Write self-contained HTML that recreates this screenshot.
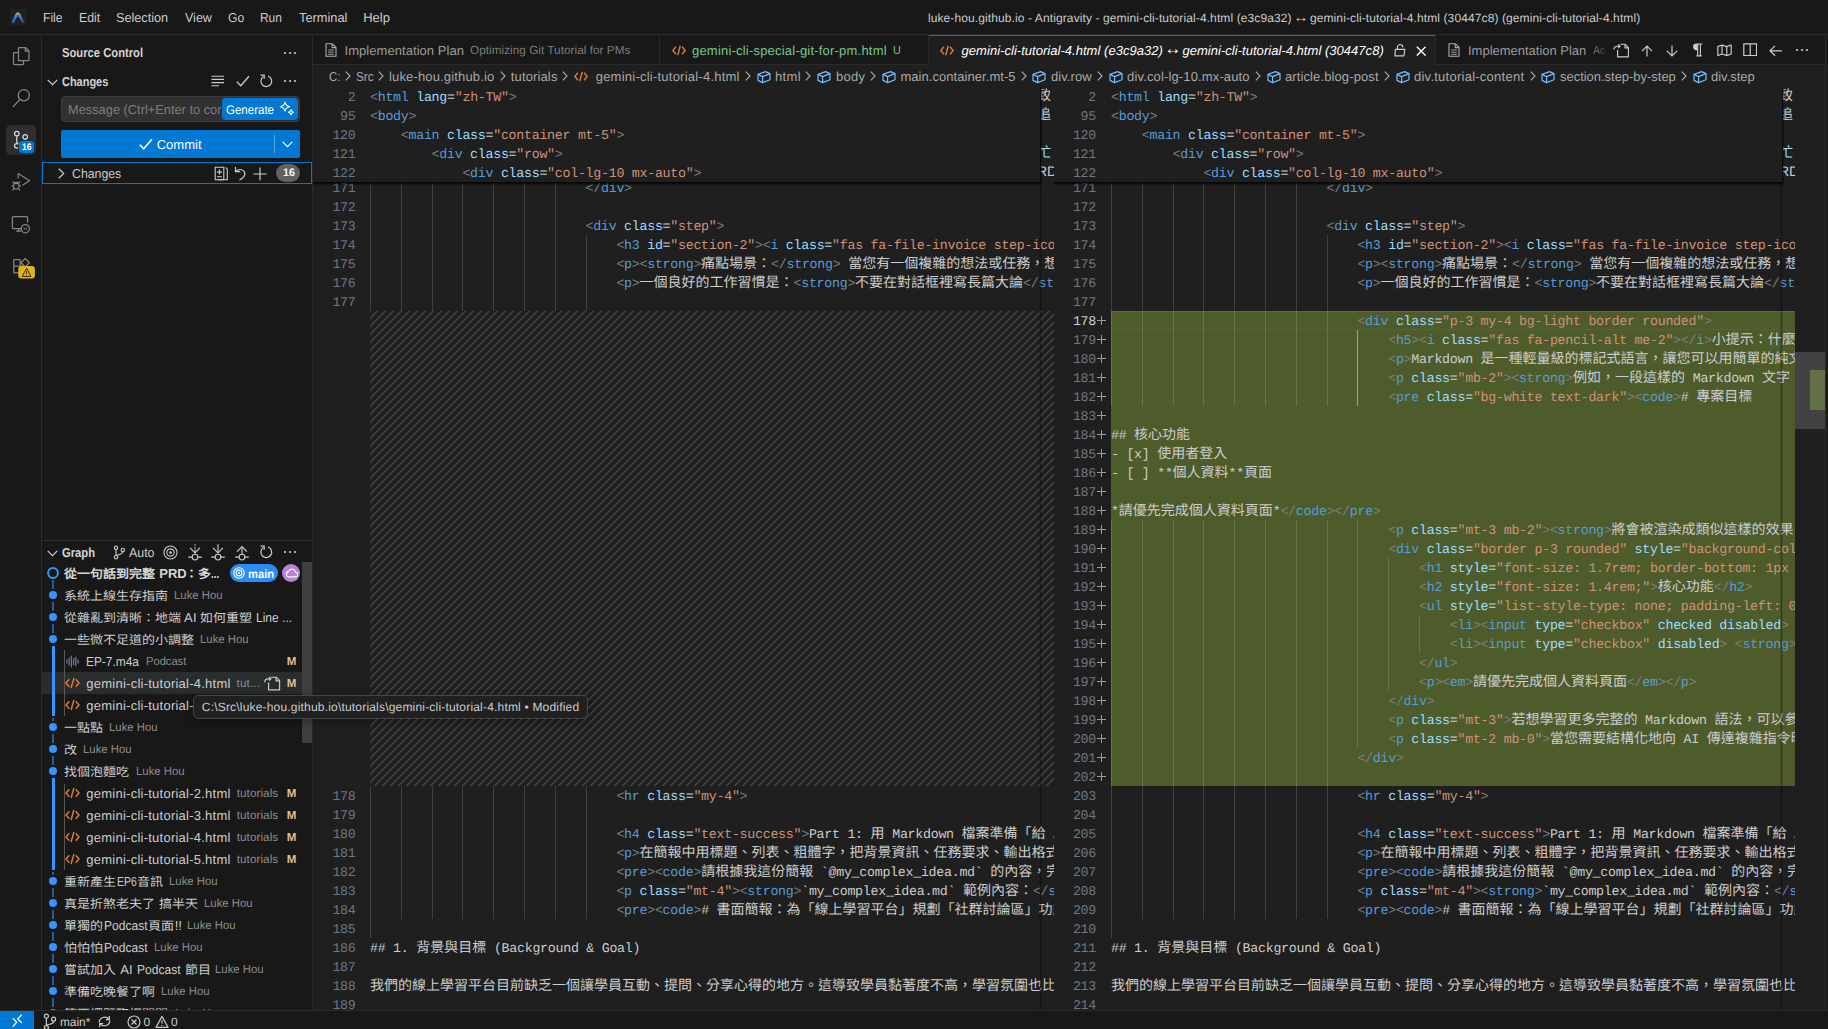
<!DOCTYPE html>
<html lang="zh-TW"><head><meta charset="utf-8"><title>Antigravity</title><style>
*{box-sizing:border-box;margin:0;padding:0}
html,body{width:1828px;height:1029px;overflow:hidden;background:#181818}
body{text-rendering:geometricPrecision;position:relative;font-family:"Liberation Sans",sans-serif;font-size:13px;color:#ccc}
.b{position:absolute;display:block}
.t{position:absolute;white-space:pre;line-height:20px;transform-origin:0 50%;display:block}
.cjs{overflow:visible;letter-spacing:0;font-weight:500}
.pane{position:absolute;overflow:hidden}
.ln{position:absolute;left:0;height:19px;line-height:21px;white-space:pre;font-family:"Liberation Mono",monospace;font-size:13.3px;letter-spacing:-0.28px;color:#ccc}
.num{position:absolute;height:19px;line-height:21px;white-space:pre;font-family:"Liberation Mono",monospace;font-size:13.3px;letter-spacing:-0.28px;color:#6e7681;text-align:right}
.cj{display:inline-block;font-weight:500;font-size:14px;letter-spacing:0;white-space:nowrap;font-family:"Liberation Sans",sans-serif;line-height:19px;vertical-align:baseline}
.ar{font-size:1.28em;line-height:0;position:relative;top:-0.05em;margin:0 -0.14em 0 -0.12em;letter-spacing:0}
.cj i,.cjs i{display:inline-block;width:1em;text-align:center;font-style:normal}
.p{color:#808080}.g{color:#569cd6}.a{color:#9cdcfe}.s{color:#ce9178}.x{color:#cccccc}
</style></head><body>
<div class="b" style="left:0px;top:0px;width:1828px;height:35px;background:#181818;border-bottom:1px solid #2b2b2b;"></div>
<div class="b" style="left:10.3px;top:9.2px;width:15.5px;height:15.5px;background:#202125;"></div>
<svg class="b" style="left:0;top:0" width="40" height="34" viewBox="0 0 40 34"><defs><linearGradient id="lg" gradientUnits="userSpaceOnUse" x1="17" y1="12" x2="19" y2="23"><stop offset="0" stop-color="#ef8f4a"/><stop offset="0.13" stop-color="#c9c860"/><stop offset="0.24" stop-color="#6fc6a0"/><stop offset="0.38" stop-color="#4a97f2"/><stop offset="0.8" stop-color="#3d73cf"/><stop offset="1" stop-color="#335fb0" stop-opacity="0.75"/></linearGradient></defs><path d="M12.9 21.9C15 19.2 15.8 13.3 17.9 13.3C20 13.3 20.8 19.2 22.9 21.9" fill="none" stroke="url(#lg)" stroke-width="2.1" stroke-linecap="round" opacity="0.88"/><path d="M15.7 17.8C16.6 16.4 17.1 15.6 17.9 15.6C18.7 15.6 19.2 16.4 20.1 17.8" fill="none" stroke="#4282dc" stroke-width="1.4" opacity="0.9"/></svg>
<span class="t" style="left:43.10px;top:7.50px;font-size:13px;color:#cccccc;transform:scaleX(0.9309);">File</span>
<span class="t" style="left:78.80px;top:7.50px;font-size:13px;color:#cccccc;transform:scaleX(0.9464);">Edit</span>
<span class="t" style="left:116.40px;top:7.50px;font-size:13px;color:#cccccc;transform:scaleX(0.9742);">Selection</span>
<span class="t" style="left:184.90px;top:7.50px;font-size:13px;color:#cccccc;transform:scaleX(0.9627);">View</span>
<span class="t" style="left:228.00px;top:7.50px;font-size:13px;color:#cccccc;transform:scaleX(0.9341);">Go</span>
<span class="t" style="left:260.40px;top:7.50px;font-size:13px;color:#cccccc;transform:scaleX(0.9183);">Run</span>
<span class="t" style="left:298.90px;top:7.50px;font-size:13px;color:#cccccc;transform:scaleX(0.9852);">Terminal</span>
<span class="t" style="left:363.20px;top:7.50px;font-size:13px;color:#cccccc;letter-spacing:0.021px;">Help</span>
<span class="t" style="left:927.90px;top:8.34px;font-size:12px;color:#cccccc;letter-spacing:0.107px;">luke-hou.github.io - Antigravity - gemini-cli-tutorial-4.html (e3c9a32) <span class="ar">↔</span> gemini-cli-tutorial-4.html (30447c8) (gemini-cli-tutorial-4.html)</span>
<div class="b" style="left:0px;top:35px;width:42px;height:975px;background:#181818;border-right:1px solid #2b2b2b;"></div>
<svg class="b" style="left:12px;top:46px;" width="18" height="20" viewBox="0 0 18 20"><g fill="none" stroke="#868686" stroke-width="1.25" stroke-linejoin="round"><path d="M6.5 14.5V2.2a.7.7 0 0 1 .7-.7h6.3l3.5 3.5v8.8a.7.7 0 0 1-.7.7z"/><path d="M13.3 1.7v3.5h3.5"/><path d="M6.5 6.5H2.2a.7.7 0 0 0-.7.7v10.6a.7.7 0 0 0 .7.7h8.6a.7.7 0 0 0 .7-.7v-3.3"/></g></svg>
<svg class="b" style="left:12px;top:88px;" width="19" height="20" viewBox="0 0 19 20"><g fill="none" stroke="#868686" stroke-width="1.3"><circle cx="11.8" cy="7.3" r="5.6"/><path d="M7.9 11.4L1.3 18.6" stroke-linecap="round"/></g></svg>
<div class="b" style="left:6px;top:125px;width:30px;height:30px;background:#2e2e2e;border-radius:5px;"></div>
<svg class="b" style="left:11.2px;top:130.2px;" width="20" height="20" viewBox="0 0 20 20"><g fill="none" stroke="#d7d7d7" stroke-width="1.25"><circle cx="5.8" cy="3.6" r="2.3"/><circle cx="5.8" cy="15.8" r="2.3"/><circle cx="14.2" cy="6.8" r="2.3"/><path d="M5.8 5.9v7.6M14.2 9.1c0 3.2-4.5 3-8.2 4.6"/></g></svg>
<div class="b" style="left:18.4px;top:140.2px;width:16.5px;height:14px;background:#2b2c2d;border-radius:5px;"></div>
<div class="b" style="left:19.4px;top:141.2px;width:14.5px;height:12px;background:#0078d4;border-radius:3.5px;"></div>
<span class="t" style="left:21.90px;top:137.91px;font-size:9.5px;color:#ffffff;font-weight:bold;transform:scaleX(0.8990);">16</span>
<svg class="b" style="left:11px;top:172px;" width="20" height="20" viewBox="0 0 20 20"><g fill="none" stroke="#868686" stroke-width="1.2" stroke-linejoin="round"><path d="M7.2 6.5V1.6L18.6 8.8 11.5 13.3"/><ellipse cx="5.3" cy="13.7" rx="2.7" ry="3.4"/><path d="M3.3 11.2l-1.8-1.8M7.3 11.2l1.8-1.8M2.6 13.9H.6M10 13.9H8M3.3 16.4l-1.8 1.9M7.3 16.4l1.8 1.9M3.2 11.6h4.2"/></g></svg>
<svg class="b" style="left:11px;top:215px;" width="20" height="20" viewBox="0 0 20 20"><g fill="none" stroke="#868686" stroke-width="1.25"><path d="M10.2 13.6H2.3a.9.9 0 0 1-.9-.9V2.6a.9.9 0 0 1 .9-.9h13.4a.9.9 0 0 1 .9.9v5"/><path d="M5.2 16.2h4.9M7.6 13.8v2.2"/><circle cx="14.3" cy="13.7" r="4.1"/><path d="M12.9 12.5l1 1.2-1 1.2M15.7 12.5l-1 1.2 1 1.2" stroke-width="0.9"/></g></svg>
<svg class="b" style="left:12px;top:257px;" width="20" height="20" viewBox="0 0 20 20"><g fill="none" stroke="#868686" stroke-width="1.25" stroke-linejoin="round"><path d="M1.8 2.6h6.4v6.6H1.8zM1.8 9.2h6.4v6.6H1.8zM8.2 9.2h3"/><path d="M13.2 1.5l4.2 4.2-4.2 4.2-4.2-4.2z"/></g></svg>
<svg class="b" style="left:17.6px;top:266.3px;" width="17" height="13" viewBox="0 0 17 13"><rect x="0.3" y="0" width="16.6" height="12.6" rx="3" fill="#e0b41e"/><path d="M8.6 2.2L4.2 10.4h8.8z" fill="none" stroke="#2a2208" stroke-width="0.95" stroke-linejoin="round"/><path d="M8.6 5.2v2.6M8.6 8.6v.8" stroke="#2a2208" stroke-width="0.95"/></svg>
<div class="b" style="left:0px;top:1010px;width:1828px;height:19px;background:#181818;border-top:1px solid #2b2b2b;"></div>
<div class="b" style="left:0px;top:1011px;width:34px;height:18px;background:#0078d4;"></div>
<svg class="b" style="left:11px;top:1012px;" width="13" height="17" viewBox="0 0 13 17"><path d="M1.8 6.1l3.9 4.1-3.9 4.5M10.7 2.8L6.7 6.9l4 3.8" fill="none" stroke="#fff" stroke-width="1.25"/></svg>
<svg class="b" style="left:42.5px;top:1012.5px;" width="14" height="18" viewBox="0 0 14 18"><g fill="none" stroke="#ccc" stroke-width="1.2"><circle cx="3.4" cy="3.2" r="2"/><circle cx="3.4" cy="14.6" r="2"/><circle cx="10.6" cy="6.2" r="2"/><path d="M3.4 5.2v7.4M10.6 8.2c0 3-4 2.6-7 4.2"/></g></svg>
<span class="t" style="left:59.90px;top:1012.04px;font-size:12px;color:#cccccc;transform:scaleX(0.9876);">main*</span>
<svg class="b" style="left:96.5px;top:1014px;" width="15" height="15" viewBox="0 0 15 15"><g fill="none" stroke="#ccc" stroke-width="1.25"><path d="M2.2 8.6a5.4 5.4 0 0 1 9.6-3.4M12.8 6.4a5.4 5.4 0 0 1-9.6 3.4"/><path d="M12.3 1.9v3.6H8.8M2.7 13.1V9.5h3.5"/></g></svg>
<svg class="b" style="left:127px;top:1014.5px;" width="14" height="14" viewBox="0 0 14 14"><g fill="none" stroke="#ccc" stroke-width="1.15"><circle cx="7" cy="7" r="6"/><path d="M4.5 4.5l5 5M9.5 4.5l-5 5"/></g></svg>
<span class="t" style="left:143.50px;top:1012.04px;font-size:12px;color:#cccccc;">0</span>
<svg class="b" style="left:154.5px;top:1014.5px;" width="14" height="14" viewBox="0 0 14 14"><g fill="none" stroke="#ccc" stroke-width="1.15" stroke-linejoin="round"><path d="M7 1.4L13 12.4H1z"/><path d="M7 5.2v3.6M7 10v1"/></g></svg>
<span class="t" style="left:171.00px;top:1012.04px;font-size:12px;color:#cccccc;">0</span>
<div class="b" style="left:42px;top:35px;width:271px;height:975px;background:#181818;border-right:1px solid #2b2b2b;"></div>
<span class="t" style="left:62.00px;top:42.50px;font-size:13px;color:#d4d4d4;font-weight:bold;transform:scaleX(0.8637);">Source Control</span>
<svg class="b" style="left:282.5px;top:50.5px;" width="14" height="4" viewBox="0 0 14 4"><circle cx="2" cy="2" r="1.1" fill="#ccc"/><circle cx="7" cy="2" r="1.1" fill="#ccc"/><circle cx="12" cy="2" r="1.1" fill="#ccc"/></svg>
<svg class="b" style="left:46.5px;top:78.5px;" width="11" height="7" viewBox="0 0 11 7"><path d="M.7 .8l4.8 4.9L10.3 .8" fill="none" stroke="#ccc" stroke-width="1.2"/></svg>
<span class="t" style="left:62.00px;top:71.50px;font-size:13px;color:#d4d4d4;font-weight:bold;transform:scaleX(0.8433);">Changes</span>
<svg class="b" style="left:211px;top:75px;" width="14" height="12" viewBox="0 0 14 12"><path d="M.5 1.2h12.5M.5 4.4h12.5M.5 7.6h12.5M.5 10.8h7.5" stroke="#ccc" stroke-width="1.1"/></svg>
<svg class="b" style="left:235.5px;top:74.5px;" width="14" height="12" viewBox="0 0 14 12"><path d="M.8 6.8l3.9 4L13 1.2" fill="none" stroke="#ccc" stroke-width="1.3"/></svg>
<svg class="b" style="left:259px;top:74px;" width="14" height="14" viewBox="0 0 14 14"><g fill="none" stroke="#ccc" stroke-width="1.2"><path d="M4.4 2.6A5.4 5.4 0 1 0 8.9 2"/><path d="M1.6 1.2h3.6v3.6" stroke-linejoin="miter"/></g></svg>
<svg class="b" style="left:282.5px;top:79px;" width="14" height="4" viewBox="0 0 14 4"><circle cx="2" cy="2" r="1.1" fill="#ccc"/><circle cx="7" cy="2" r="1.1" fill="#ccc"/><circle cx="12" cy="2" r="1.1" fill="#ccc"/></svg>
<div class="b" style="left:61px;top:96px;width:239px;height:26px;background:#313131;border:1px solid #3c3c3c;border-radius:4px;"></div>
<span class="t" style="left:68.00px;top:99.50px;font-size:13px;color:#7e7e7e;transform:scaleX(0.9859);">Message (Ctrl+Enter to cor</span>
<div class="b" style="left:222px;top:98px;width:75.8px;height:22px;background:#0078d4;border-radius:4px;"></div>
<span class="t" style="left:226.00px;top:99.67px;font-size:12.5px;color:#ffffff;transform:scaleX(0.9210);">Generate</span>
<svg class="b" style="left:278.5px;top:101px;" width="16" height="16" viewBox="0 0 16 16"><g fill="none" stroke="#fff" stroke-width="1.1" stroke-linejoin="round"><path d="M6 1.2c.5 2.9 1.4 3.9 4.6 4.5C7.4 6.3 6.5 7.3 6 10.2 5.5 7.3 4.6 6.3 1.4 5.7 4.6 5.1 5.5 4.1 6 1.2z"/><path d="M12 8.6c.3 1.6.8 2.2 2.6 2.6-1.8.4-2.3 1-2.6 2.6-.3-1.6-.8-2.2-2.6-2.6 1.8-.4 2.3-1 2.6-2.6z"/></g></svg>
<div class="b" style="left:61px;top:130px;width:239px;height:28px;background:#0078d4;border-radius:2px;"></div>
<svg class="b" style="left:138.5px;top:137.5px;" width="14" height="12" viewBox="0 0 14 12"><path d="M.8 6.8l3.9 4L13 1.2" fill="none" stroke="#fff" stroke-width="1.5"/></svg>
<span class="t" style="left:156.70px;top:134.50px;font-size:13px;color:#ffffff;letter-spacing:0.025px;">Commit</span>
<div class="b" style="left:274px;top:135px;width:1px;height:18px;background:rgba(255,255,255,0.35);"></div>
<svg class="b" style="left:281.5px;top:141px;" width="11" height="7" viewBox="0 0 11 7"><path d="M.7 .8l4.8 4.9L10.3 .8" fill="none" stroke="#fff" stroke-width="1.2"/></svg>
<div class="b" style="left:42px;top:162px;width:270px;height:22px;background:#181818;border:1px solid #0078d4;"></div>
<svg class="b" style="left:58px;top:167.5px;" width="7" height="11" viewBox="0 0 7 11"><path d="M.8 .7l4.9 4.8L.8 10.3" fill="none" stroke="#ccc" stroke-width="1.2"/></svg>
<span class="t" style="left:72.00px;top:163.50px;font-size:13px;color:#cccccc;transform:scaleX(0.9454);">Changes</span>
<svg class="b" style="left:213.5px;top:165.5px;" width="15" height="15" viewBox="0 0 15 15"><g fill="none" stroke="#ccc" stroke-width="1.1"><path d="M1.2 1.2h8.6v12.6H1.2z"/><path d="M11.6 1.6c1.3.4 1.7 1 1.7 2.2v10H3.6"/><path d="M5.5 3.6v5M3 6.1h5M3 10.8h5"/></g></svg>
<svg class="b" style="left:234px;top:165.5px;" width="13" height="15" viewBox="0 0 13 15"><g fill="none" stroke="#ccc" stroke-width="1.2"><path d="M1.5 1v4.6h4.6"/><path d="M1.8 5.4C4 3 8.6 2.6 10.3 5.7c1.6 3-1 6.2-4.8 8.4"/></g></svg>
<svg class="b" style="left:253px;top:166.5px;" width="14" height="14" viewBox="0 0 14 14"><path d="M7 .5v13M.5 7h13" stroke="#ccc" stroke-width="1.2"/></svg>
<div class="b" style="left:276.3px;top:164.2px;width:23.7px;height:17.6px;background:#616161;border-radius:9px;"></div>
<span class="t" style="left:282.60px;top:163.29px;font-size:11px;color:#f8f8f8;font-weight:bold;transform:scaleX(0.9726);">16</span>
<div class="b" style="left:42px;top:540px;width:270px;height:1px;background:#2b2b2b;"></div>
<svg class="b" style="left:46.5px;top:549.5px;" width="11" height="7" viewBox="0 0 11 7"><path d="M.7 .8l4.8 4.9L10.3 .8" fill="none" stroke="#ccc" stroke-width="1.2"/></svg>
<span class="t" style="left:62.00px;top:542.50px;font-size:13px;color:#d4d4d4;font-weight:bold;transform:scaleX(0.8620);">Graph</span>
<svg class="b" style="left:112.5px;top:545px;" width="13" height="15" viewBox="0 0 13 15"><g fill="none" stroke="#ccc" stroke-width="1.1"><circle cx="3" cy="2.8" r="1.7"/><circle cx="3" cy="12.2" r="1.7"/><circle cx="9.8" cy="5" r="1.7"/><path d="M3 4.5v6M9.8 6.7c0 2.6-3.6 2.3-6.4 3.8"/></g></svg>
<span class="t" style="left:128.50px;top:542.50px;font-size:13px;color:#cccccc;transform:scaleX(0.9535);">Auto</span>
<svg class="b" style="left:162.5px;top:544.5px;" width="15" height="15" viewBox="0 0 16 16"><g fill="none" stroke="#ccc" stroke-width="1.15"><circle cx="8" cy="8" r="7"/><circle cx="8" cy="8" r="3.9"/></g><circle cx="8" cy="8" r="1.4" fill="#ccc"/></svg>
<svg class="b" style="left:187.6px;top:543.5px;" width="14" height="17" viewBox="0 0 14 17"><g fill="none" stroke="#ccc" stroke-width="1.15"><circle cx="7" cy="13.1" r="2.85"/><path d="M.2 13.1h3.9M9.9 13.1h3.9"/><path d="M7 .2v1.5M7 2.9v1.5M7 5.6v2.8" stroke-width="1.1"/><path d="M2.1 3.9L7 8.9l4.9-5"/></g></svg>
<svg class="b" style="left:211.4px;top:543.5px;" width="14" height="17" viewBox="0 0 14 17"><g fill="none" stroke="#ccc" stroke-width="1.15"><circle cx="7" cy="13.1" r="2.85"/><path d="M.2 13.1h3.9M9.9 13.1h3.9"/><path d="M7 .3v8.2"/><path d="M2.1 3.9L7 8.9l4.9-5"/></g></svg>
<svg class="b" style="left:235.3px;top:543.5px;" width="14" height="17" viewBox="0 0 14 17"><g fill="none" stroke="#ccc" stroke-width="1.15"><circle cx="7" cy="13.1" r="2.85"/><path d="M.2 13.1h3.9M9.9 13.1h3.9"/><path d="M7 3.2v7"/><path d="M2.1 7.6L7 2.6l4.9 5"/></g></svg>
<svg class="b" style="left:259px;top:545px;" width="14" height="14" viewBox="0 0 14 14"><g fill="none" stroke="#ccc" stroke-width="1.2"><path d="M4.4 2.6A5.4 5.4 0 1 0 8.9 2"/><path d="M1.6 1.2h3.6v3.6" stroke-linejoin="miter"/></g></svg>
<svg class="b" style="left:282.5px;top:550px;" width="14" height="4" viewBox="0 0 14 4"><circle cx="2" cy="2" r="1.1" fill="#ccc"/><circle cx="7" cy="2" r="1.1" fill="#ccc"/><circle cx="12" cy="2" r="1.1" fill="#ccc"/></svg>
<div class="pane" style="left:42px;top:562px;width:270px;height:448px">
<div class="b" style="left:0px;top:110px;width:270px;height:22px;background:#2a2d2e;"></div>
<div class="b" style="left:10.25px;top:17.5px;width:1.5px;height:9px;background:#2b5c96;"></div>
<div class="b" style="left:10.25px;top:39.5px;width:1.5px;height:9px;background:#2b5c96;"></div>
<div class="b" style="left:10.25px;top:61.5px;width:1.5px;height:9px;background:#2b5c96;"></div>
<div class="b" style="left:10.25px;top:171.5px;width:1.5px;height:9px;background:#2b5c96;"></div>
<div class="b" style="left:10.25px;top:193.5px;width:1.5px;height:9px;background:#2b5c96;"></div>
<div class="b" style="left:10.25px;top:325.5px;width:1.5px;height:9px;background:#2b5c96;"></div>
<div class="b" style="left:10.25px;top:347.5px;width:1.5px;height:9px;background:#2b5c96;"></div>
<div class="b" style="left:10.25px;top:369.5px;width:1.5px;height:9px;background:#2b5c96;"></div>
<div class="b" style="left:10.25px;top:391.5px;width:1.5px;height:9px;background:#2b5c96;"></div>
<div class="b" style="left:10.25px;top:413.5px;width:1.5px;height:9px;background:#2b5c96;"></div>
<div class="b" style="left:10.25px;top:435.5px;width:1.5px;height:9px;background:#2b5c96;"></div>
<div class="b" style="left:9.5px;top:83.5px;width:3px;height:70.5px;background:#3794ff;"></div>
<div class="b" style="left:10.25px;top:155.5px;width:1.5px;height:3px;background:#2b5c96;"></div>
<div class="b" style="left:9.5px;top:215.5px;width:3px;height:92.5px;background:#3794ff;"></div>
<div class="b" style="left:10.25px;top:309.5px;width:1.5px;height:3px;background:#2b5c96;"></div>
<div class="b" style="left:10.25px;top:457.5px;width:1.5px;height:10.5px;background:#2b5c96;"></div>
<div class="b" style="left:22px;top:88px;width:1px;height:66px;background:#585858;"></div>
<div class="b" style="left:22px;top:222px;width:1px;height:86px;background:#585858;"></div>
<svg class="b" style="left:4px;top:4px;" width="14" height="14" viewBox="0 0 14 14"><circle cx="7" cy="7" r="4.9" fill="#181818" stroke="#3794ff" stroke-width="2"/></svg>
<span class="t cjs" style="left:22.20px;top:2.10px;font-size:12.09px;color:#d7d7d7;width:84.63px;transform:scaleX(1.0753);font-weight:bold;"><i>從</i><i>一</i><i>句</i><i>話</i><i>到</i><i>完</i><i>整</i></span>
<span class="t" style="left:117.20px;top:1.70px;font-size:13px;color:#d7d7d7;font-weight:bold;letter-spacing:0.026px;">PRD</span>
<span class="t cjs" style="left:142.70px;top:2.10px;font-size:12.09px;color:#d7d7d7;width:24.18px;transform:scaleX(1.0753);font-weight:bold;"><i>：</i><i>多</i></span>
<span class="t" style="left:168.50px;top:1.70px;font-size:13px;color:#d7d7d7;font-weight:bold;transform:scaleX(0.7567);">...</span>
<div class="b" style="left:188px;top:2.3px;width:48px;height:17.8px;background:#2b8cf5;border-radius:9px;"></div>
<svg class="b" style="left:190.6px;top:5.2px;" width="12" height="12" viewBox="0 0 16 16"><g fill="none" stroke="#fff" stroke-width="1.5"><circle cx="8" cy="8" r="7"/><circle cx="8" cy="8" r="3.9"/></g><circle cx="8" cy="8" r="1.4" fill="#fff"/></svg>
<span class="t" style="left:205.80px;top:2.04px;font-size:12px;color:#ffffff;font-weight:bold;transform:scaleX(0.9319);">main</span>
<div class="b" style="left:240px;top:2.3px;width:18px;height:17.8px;background:#b583d8;border-radius:9px;"></div>
<svg class="b" style="left:242.5px;top:6px;" width="13" height="10" viewBox="0 0 13 10"><path d="M3.6 8.9h6.6a2.3 2.3 0 0 0 .3-4.6A3.6 3.6 0 0 0 3.6 3.4 2.8 2.8 0 0 0 3.6 8.9z" fill="none" stroke="#fff" stroke-width="1.1"/></svg>
<svg class="b" style="left:6px;top:28px;" width="10" height="10" viewBox="0 0 10 10"><circle cx="5" cy="5" r="4" fill="#3794ff"/></svg>
<span class="t cjs" style="left:22.20px;top:24.10px;font-size:12.09px;color:#ccc;width:96.72px;transform:scaleX(1.0753);"><i>系</i><i>統</i><i>上</i><i>線</i><i>生</i><i>存</i><i>指</i><i>南</i></span>
<span class="t" style="left:132.00px;top:24.15px;font-size:11.7px;color:#8c8c8c;transform:scaleX(0.9723);">Luke Hou</span>
<svg class="b" style="left:6px;top:50px;" width="10" height="10" viewBox="0 0 10 10"><circle cx="5" cy="5" r="4" fill="#3794ff"/></svg>
<span class="t cjs" style="left:22.20px;top:46.10px;font-size:12.09px;color:#ccc;width:108.81px;transform:scaleX(1.0753);"><i>從</i><i>雜</i><i>亂</i><i>到</i><i>清</i><i>晰</i><i>：</i><i>地</i><i>端</i></span>
<span class="t" style="left:142.10px;top:45.70px;font-size:13px;color:#ccc;letter-spacing:0.117px;">AI</span>
<span class="t cjs" style="left:158.00px;top:46.10px;font-size:12.09px;color:#ccc;width:48.36px;transform:scaleX(1.0753);"><i>如</i><i>何</i><i>重</i><i>塑</i></span>
<span class="t" style="left:213.70px;top:45.70px;font-size:13px;color:#ccc;transform:scaleX(0.9250);">Line ...</span>
<svg class="b" style="left:6px;top:72px;" width="10" height="10" viewBox="0 0 10 10"><circle cx="5" cy="5" r="4" fill="#3794ff"/></svg>
<span class="t cjs" style="left:22.20px;top:68.10px;font-size:12.09px;color:#ccc;width:120.90px;transform:scaleX(1.0753);"><i>一</i><i>些</i><i>微</i><i>不</i><i>足</i><i>道</i><i>的</i><i>小</i><i>調</i><i>整</i></span>
<span class="t" style="left:158.00px;top:68.15px;font-size:11.7px;color:#8c8c8c;transform:scaleX(0.9723);">Luke Hou</span>
<svg class="b" style="left:24px;top:92.5px;" width="13" height="13" viewBox="0 0 13 13"><path d="M1 4.5v4M3.2 2.5v8M5.4 .8v11.4M7.6 3v7M9.8 1.8v9.4M12 4.5v4" stroke="#5f7e9e" stroke-width="1.25" fill="none"/></svg>
<span class="t" style="left:44.30px;top:89.70px;font-size:13px;color:#ccc;transform:scaleX(0.9152);">EP-7.m4a</span>
<span class="t" style="left:103.70px;top:90.15px;font-size:11.7px;color:#8c8c8c;transform:scaleX(0.9533);">Podcast</span>
<span class="t" style="left:244.80px;top:90.22px;font-size:11.5px;color:#e2c08d;font-weight:bold;letter-spacing:0.620px;">M</span>
<svg class="b" style="left:23px;top:115px;" width="15" height="12" viewBox="0 0 15 12"><g fill="none" stroke="#e37933" stroke-width="1.45"><path d="M4.3 2.2L1 6l3.3 3.8M10.7 2.2L14 6l-3.3 3.8M8.9 1L6.1 11"/></g></svg>
<span class="t" style="left:44.30px;top:111.70px;font-size:13px;color:#cccccc;letter-spacing:0.245px;">gemini-cli-tutorial-4.html</span>
<span class="t" style="left:194.50px;top:112.15px;font-size:11.7px;color:#8c8c8c;letter-spacing:0.148px;">tut...</span>
<span class="t" style="left:244.80px;top:112.22px;font-size:11.5px;color:#e2c08d;font-weight:bold;letter-spacing:0.620px;">M</span>
<svg class="b" style="left:222px;top:113.5px;" width="17" height="15" viewBox="0 0 17 15"><g fill="none" stroke="#ccc" stroke-width="1.15" stroke-linejoin="round"><path d="M7 1.2h5.2l3.4 3.4v9.2H4.6V6.6"/><path d="M12 1.4v3.4h3.4"/><path d="M.8 6.2c0-2.2 1.2-3.4 3.4-3.4h2.6M5 .9l1.9 1.9L5 4.7"/></g></svg>
<svg class="b" style="left:23px;top:137px;" width="15" height="12" viewBox="0 0 15 12"><g fill="none" stroke="#e37933" stroke-width="1.45"><path d="M4.3 2.2L1 6l3.3 3.8M10.7 2.2L14 6l-3.3 3.8M8.9 1L6.1 11"/></g></svg>
<span class="t" style="left:44.30px;top:133.70px;font-size:13px;color:#cccccc;letter-spacing:0.245px;">gemini-cli-tutorial-5.html</span>
<svg class="b" style="left:6px;top:160px;" width="10" height="10" viewBox="0 0 10 10"><circle cx="5" cy="5" r="4" fill="#3794ff"/></svg>
<span class="t cjs" style="left:22.20px;top:156.10px;font-size:12.09px;color:#ccc;width:36.27px;transform:scaleX(1.0753);"><i>一</i><i>點</i><i>點</i></span>
<span class="t" style="left:67.20px;top:156.15px;font-size:11.7px;color:#8c8c8c;transform:scaleX(0.9723);">Luke Hou</span>
<svg class="b" style="left:6px;top:182px;" width="10" height="10" viewBox="0 0 10 10"><circle cx="5" cy="5" r="4" fill="#3794ff"/></svg>
<span class="t cjs" style="left:22.20px;top:178.10px;font-size:12.09px;color:#ccc;width:12.09px;transform:scaleX(1.0753);"><i>改</i></span>
<span class="t" style="left:41.30px;top:178.15px;font-size:11.7px;color:#8c8c8c;transform:scaleX(0.9723);">Luke Hou</span>
<svg class="b" style="left:6px;top:204px;" width="10" height="10" viewBox="0 0 10 10"><circle cx="5" cy="5" r="4" fill="#3794ff"/></svg>
<span class="t cjs" style="left:22.20px;top:200.10px;font-size:12.09px;color:#ccc;width:60.45px;transform:scaleX(1.0753);"><i>找</i><i>個</i><i>泡</i><i>麵</i><i>吃</i></span>
<span class="t" style="left:93.60px;top:200.15px;font-size:11.7px;color:#8c8c8c;transform:scaleX(0.9723);">Luke Hou</span>
<svg class="b" style="left:23px;top:225px;" width="15" height="12" viewBox="0 0 15 12"><g fill="none" stroke="#e37933" stroke-width="1.45"><path d="M4.3 2.2L1 6l3.3 3.8M10.7 2.2L14 6l-3.3 3.8M8.9 1L6.1 11"/></g></svg>
<span class="t" style="left:44.30px;top:221.70px;font-size:13px;color:#cccccc;letter-spacing:0.245px;">gemini-cli-tutorial-2.html</span>
<span class="t" style="left:194.70px;top:222.15px;font-size:11.7px;color:#8c8c8c;letter-spacing:0.066px;">tutorials</span>
<span class="t" style="left:244.80px;top:222.22px;font-size:11.5px;color:#e2c08d;font-weight:bold;letter-spacing:0.620px;">M</span>
<svg class="b" style="left:23px;top:247px;" width="15" height="12" viewBox="0 0 15 12"><g fill="none" stroke="#e37933" stroke-width="1.45"><path d="M4.3 2.2L1 6l3.3 3.8M10.7 2.2L14 6l-3.3 3.8M8.9 1L6.1 11"/></g></svg>
<span class="t" style="left:44.30px;top:243.70px;font-size:13px;color:#cccccc;letter-spacing:0.245px;">gemini-cli-tutorial-3.html</span>
<span class="t" style="left:194.70px;top:244.15px;font-size:11.7px;color:#8c8c8c;letter-spacing:0.066px;">tutorials</span>
<span class="t" style="left:244.80px;top:244.22px;font-size:11.5px;color:#e2c08d;font-weight:bold;letter-spacing:0.620px;">M</span>
<svg class="b" style="left:23px;top:269px;" width="15" height="12" viewBox="0 0 15 12"><g fill="none" stroke="#e37933" stroke-width="1.45"><path d="M4.3 2.2L1 6l3.3 3.8M10.7 2.2L14 6l-3.3 3.8M8.9 1L6.1 11"/></g></svg>
<span class="t" style="left:44.30px;top:265.70px;font-size:13px;color:#cccccc;letter-spacing:0.245px;">gemini-cli-tutorial-4.html</span>
<span class="t" style="left:194.70px;top:266.15px;font-size:11.7px;color:#8c8c8c;letter-spacing:0.066px;">tutorials</span>
<span class="t" style="left:244.80px;top:266.22px;font-size:11.5px;color:#e2c08d;font-weight:bold;letter-spacing:0.620px;">M</span>
<svg class="b" style="left:23px;top:291px;" width="15" height="12" viewBox="0 0 15 12"><g fill="none" stroke="#e37933" stroke-width="1.45"><path d="M4.3 2.2L1 6l3.3 3.8M10.7 2.2L14 6l-3.3 3.8M8.9 1L6.1 11"/></g></svg>
<span class="t" style="left:44.30px;top:287.70px;font-size:13px;color:#cccccc;letter-spacing:0.245px;">gemini-cli-tutorial-5.html</span>
<span class="t" style="left:194.70px;top:288.15px;font-size:11.7px;color:#8c8c8c;letter-spacing:0.066px;">tutorials</span>
<span class="t" style="left:244.80px;top:288.22px;font-size:11.5px;color:#e2c08d;font-weight:bold;letter-spacing:0.620px;">M</span>
<svg class="b" style="left:6px;top:314px;" width="10" height="10" viewBox="0 0 10 10"><circle cx="5" cy="5" r="4" fill="#3794ff"/></svg>
<span class="t cjs" style="left:22.20px;top:310.10px;font-size:12.09px;color:#ccc;width:48.36px;transform:scaleX(1.0753);"><i>重</i><i>新</i><i>產</i><i>生</i></span>
<span class="t" style="left:74.50px;top:309.70px;font-size:13px;color:#ccc;transform:scaleX(0.8058);">EP6</span>
<span class="t cjs" style="left:94.60px;top:310.10px;font-size:12.09px;color:#ccc;width:24.18px;transform:scaleX(1.0753);"><i>音</i><i>訊</i></span>
<span class="t" style="left:127.20px;top:310.15px;font-size:11.7px;color:#8c8c8c;transform:scaleX(0.9723);">Luke Hou</span>
<svg class="b" style="left:6px;top:336px;" width="10" height="10" viewBox="0 0 10 10"><circle cx="5" cy="5" r="4" fill="#3794ff"/></svg>
<span class="t cjs" style="left:22.20px;top:332.10px;font-size:12.09px;color:#ccc;width:84.63px;transform:scaleX(1.0753);"><i>真</i><i>是</i><i>折</i><i>煞</i><i>老</i><i>夫</i><i>了</i></span>
<span class="t cjs" style="left:116.70px;top:332.10px;font-size:12.09px;color:#ccc;width:36.27px;transform:scaleX(1.0753);"><i>搞</i><i>半</i><i>天</i></span>
<span class="t" style="left:162.00px;top:332.15px;font-size:11.7px;color:#8c8c8c;transform:scaleX(0.9723);">Luke Hou</span>
<svg class="b" style="left:6px;top:358px;" width="10" height="10" viewBox="0 0 10 10"><circle cx="5" cy="5" r="4" fill="#3794ff"/></svg>
<span class="t cjs" style="left:22.20px;top:354.10px;font-size:12.09px;color:#ccc;width:36.27px;transform:scaleX(1.0753);"><i>單</i><i>獨</i><i>的</i></span>
<span class="t" style="left:61.70px;top:353.70px;font-size:13px;color:#ccc;transform:scaleX(0.9261);">Podcast</span>
<span class="t cjs" style="left:105.70px;top:354.10px;font-size:12.09px;color:#ccc;width:24.18px;transform:scaleX(1.0753);"><i>頁</i><i>面</i></span>
<span class="t" style="left:132.70px;top:353.70px;font-size:13px;color:#ccc;">!!</span>
<span class="t" style="left:145.00px;top:354.15px;font-size:11.7px;color:#8c8c8c;transform:scaleX(0.9723);">Luke Hou</span>
<svg class="b" style="left:6px;top:380px;" width="10" height="10" viewBox="0 0 10 10"><circle cx="5" cy="5" r="4" fill="#3794ff"/></svg>
<span class="t cjs" style="left:22.20px;top:376.10px;font-size:12.09px;color:#ccc;width:36.27px;transform:scaleX(1.0753);"><i>怕</i><i>怕</i><i>怕</i></span>
<span class="t" style="left:61.70px;top:375.70px;font-size:13px;color:#ccc;transform:scaleX(0.9261);">Podcast</span>
<span class="t" style="left:111.80px;top:376.15px;font-size:11.7px;color:#8c8c8c;transform:scaleX(0.9723);">Luke Hou</span>
<svg class="b" style="left:6px;top:402px;" width="10" height="10" viewBox="0 0 10 10"><circle cx="5" cy="5" r="4" fill="#3794ff"/></svg>
<span class="t cjs" style="left:22.20px;top:398.10px;font-size:12.09px;color:#ccc;width:48.36px;transform:scaleX(1.0753);"><i>嘗</i><i>試</i><i>加</i><i>入</i></span>
<span class="t" style="left:78.20px;top:397.70px;font-size:13px;color:#ccc;letter-spacing:0.217px;">AI</span>
<span class="t" style="left:94.70px;top:397.70px;font-size:13px;color:#ccc;transform:scaleX(0.9261);">Podcast</span>
<span class="t cjs" style="left:142.70px;top:398.10px;font-size:12.09px;color:#ccc;width:24.18px;transform:scaleX(1.0753);"><i>節</i><i>目</i></span>
<span class="t" style="left:173.30px;top:398.15px;font-size:11.7px;color:#8c8c8c;transform:scaleX(0.9723);">Luke Hou</span>
<svg class="b" style="left:6px;top:424px;" width="10" height="10" viewBox="0 0 10 10"><circle cx="5" cy="5" r="4" fill="#3794ff"/></svg>
<span class="t cjs" style="left:22.20px;top:420.10px;font-size:12.09px;color:#ccc;width:84.63px;transform:scaleX(1.0753);"><i>準</i><i>備</i><i>吃</i><i>晚</i><i>餐</i><i>了</i><i>啊</i></span>
<span class="t" style="left:119.00px;top:420.15px;font-size:11.7px;color:#8c8c8c;transform:scaleX(0.9723);">Luke Hou</span>
<svg class="b" style="left:6px;top:446px;" width="10" height="10" viewBox="0 0 10 10"><circle cx="5" cy="5" r="4" fill="#3794ff"/></svg>
<span class="t cjs" style="left:22.20px;top:442.10px;font-size:12.09px;color:#ccc;width:96.72px;transform:scaleX(1.0753);"><i>節</i><i>不</i><i>擇</i><i>題</i><i>臨</i><i>拒</i><i>關</i><i>關</i></span>
<span class="t" style="left:133.00px;top:442.15px;font-size:11.7px;color:#8c8c8c;transform:scaleX(0.9723);">Luke Hou</span>
</div>
<div class="b" style="left:302px;top:562px;width:10px;height:181px;background:#3f3f3f;"></div>
<div class="b" style="left:313px;top:35px;width:1515px;height:975px;background:#1f1f1f;"></div>
<div class="b" style="left:313px;top:35px;width:1515px;height:30px;background:#181818;border-bottom:1px solid #2b2b2b;"></div>
<div class="b" style="left:659px;top:35px;width:1px;height:29px;background:#2b2b2b;"></div>
<svg class="b" style="left:325.3px;top:43.2px;" width="12" height="14" viewBox="0 0 12 14"><g fill="none" stroke="#b0b0b0" stroke-width="1.1" stroke-linejoin="round"><path d="M1 .8h6.4L11 4.4v8.8H1z"/><path d="M7.2 1v3.6h3.6"/><path d="M3.2 7h5.6M3.2 9.2h5.6M3.2 11.3h5.6" stroke-width="0.9"/></g></svg>
<span class="t" style="left:344.50px;top:40.90px;font-size:13px;color:#9d9d9d;letter-spacing:0.055px;">Implementation Plan</span>
<span class="t" style="left:470.00px;top:41.35px;font-size:11.7px;color:#7d7d7d;letter-spacing:0.062px;">Optimizing Git Tutorial for PMs</span>
<div class="b" style="left:928px;top:35px;width:1px;height:29px;background:#2b2b2b;"></div>
<svg class="b" style="left:671.5px;top:44.5px;" width="14" height="11" viewBox="0 0 14 11"><g fill="none" stroke="#e37933" stroke-width="1.4"><path d="M3.9 1.8L.9 5.5l3 3.7M10.1 1.8l3 3.7-3 3.7M8.3 .7L5.7 10.3"/></g></svg>
<span class="t" style="left:692.00px;top:40.90px;font-size:13px;color:#73c991;letter-spacing:0.205px;">gemini-cli-special-git-for-pm.html</span>
<span class="t" style="left:892.60px;top:41.35px;font-size:11.7px;color:#73c991;transform:scaleX(0.9350);">U</span>
<div class="b" style="left:929px;top:35px;width:506px;height:30px;background:#1f1f1f;border-top:1px solid #0078d4;"></div>
<svg class="b" style="left:940.2px;top:44.5px;" width="14" height="11" viewBox="0 0 14 11"><g fill="none" stroke="#e37933" stroke-width="1.4"><path d="M3.9 1.8L.9 5.5l3 3.7M10.1 1.8l3 3.7-3 3.7M8.3 .7L5.7 10.3"/></g></svg>
<span class="t" style="left:961.60px;top:40.90px;font-size:13px;color:#ffffff;font-style:italic;letter-spacing:0.032px;">gemini-cli-tutorial-4.html (e3c9a32) <span class="ar">↔</span> gemini-cli-tutorial-4.html (30447c8)</span>
<svg class="b" style="left:1394px;top:43px;" width="13" height="14" viewBox="0 0 13 14"><g fill="none" stroke="#ccc" stroke-width="1.15"><path d="M1.4 6.3h9.4l-.9 6.6H.9z" stroke-linejoin="round"/><path d="M3.4 6.1V4.2a2.7 2.7 0 0 1 5.4 0v.4"/></g></svg>
<svg class="b" style="left:1415.6px;top:45.9px;" width="10.4" height="10.4" viewBox="0 0 10.4 10.4"><path d="M.8 .8l8.8 8.8M9.6 .8L.8 9.6" stroke="#fff" stroke-width="1.35"/></svg>
<div class="b" style="left:1435px;top:35px;width:1px;height:29px;background:#2b2b2b;"></div>
<svg class="b" style="left:1448px;top:43px;" width="12" height="14" viewBox="0 0 12 14"><g fill="none" stroke="#b0b0b0" stroke-width="1.1" stroke-linejoin="round"><path d="M1 .8h6.4L11 4.4v8.8H1z"/><path d="M7.2 1v3.6h3.6"/><path d="M3.2 7h5.6M3.2 9.2h5.6M3.2 11.3h5.6" stroke-width="0.9"/></g></svg>
<span class="t" style="left:1467.90px;top:40.90px;font-size:13px;color:#9d9d9d;transform:scaleX(0.9982);">Implementation Plan</span>
<span class="t" style="left:1592.70px;top:41.35px;font-size:11.7px;color:#6a6a6a;transform:scaleX(0.9008);">Ac</span>
<div class="b" style="left:1598px;top:36px;width:12px;height:28px;background:linear-gradient(90deg,rgba(24,24,24,0),#181818);"></div>
<div class="b" style="left:1608px;top:36px;width:220px;height:28px;background:#181818;"></div>
<svg class="b" style="left:1612.6px;top:43px;" width="17" height="15" viewBox="0 0 17 15"><g fill="none" stroke="#cccccc" stroke-width="1.15" stroke-linejoin="round"><path d="M7.4 1.2h4.6l3.4 3.4v9.2H4.6V7"/><path d="M12 1.4v3.4h3.4"/><path d="M1 6.6c0-2.2 1.2-3.4 3.4-3.4h2.6M5.2 1.3l1.9 1.9-1.9 1.9"/></g></svg>
<svg class="b" style="left:1640.6px;top:44.6px;" width="12" height="12" viewBox="0 0 12 12"><path d="M6 11.6V1.2M1 6.2L6 1.2l5 5" fill="none" stroke="#cccccc" stroke-width="1.2"/></svg>
<svg class="b" style="left:1666.4px;top:44.6px;" width="12" height="12" viewBox="0 0 12 12"><path d="M6 .4v10.4M1 5.8l5 5 5-5" fill="none" stroke="#cccccc" stroke-width="1.2"/></svg>
<svg class="b" style="left:1692.4px;top:43px;" width="11" height="14" viewBox="0 0 11 14"><path d="M5.7 1v5.6H4.4a2.8 2.8 0 0 1 0-5.6z" fill="#cccccc"/><path d="M10.4 1H4.4a2.8 2.8 0 0 0 0 5.6h1.3M5.7 1v11.6M8.4 1v11.6M4.4 12.9h5.3" fill="none" stroke="#cccccc" stroke-width="1.1"/></svg>
<svg class="b" style="left:1716.6px;top:44px;" width="15" height="12.4" viewBox="0 0 15 12.4"><path d="M.8 2.6l4.2-1.6 4.8 1.6L14.2 1v9l-4.4 1.6L5 10 .8 11.6zM5 1v9M9.8 2.6v9" fill="none" stroke="#cccccc" stroke-width="1.15" stroke-linejoin="round"/></svg>
<svg class="b" style="left:1743px;top:43px;" width="14.4" height="13.4" viewBox="0 0 14.4 13.4"><path d="M.8 .8h12.8v11.8H.8zM7.2 .8v11.8" fill="none" stroke="#cccccc" stroke-width="1.2" stroke-linejoin="round"/></svg>
<svg class="b" style="left:1769.2px;top:44.6px;" width="13.4" height="11.6" viewBox="0 0 13.4 11.6"><path d="M12.8 5.8H1.2M6 .8L1 5.8l5 5" fill="none" stroke="#cccccc" stroke-width="1.2"/></svg>
<svg class="b" style="left:1795.2px;top:48.2px;" width="14" height="4" viewBox="0 0 14 4"><circle cx="2" cy="2" r="1.1" fill="#cccccc"/><circle cx="7" cy="2" r="1.1" fill="#cccccc"/><circle cx="12" cy="2" r="1.1" fill="#cccccc"/></svg>
<span class="t" style="left:328.70px;top:67.00px;font-size:13px;color:#a9a9a9;transform:scaleX(0.8692);">C:</span>
<svg class="b" style="left:345px;top:71px;" width="6" height="10" viewBox="0 0 6 10"><path d="M.8 .7l4.2 4.3L.8 9.3" fill="none" stroke="#a9a9a9" stroke-width="1.15"/></svg>
<span class="t" style="left:355.70px;top:67.00px;font-size:13px;color:#a9a9a9;transform:scaleX(0.8974);">Src</span>
<svg class="b" style="left:377.7px;top:71px;" width="6" height="10" viewBox="0 0 6 10"><path d="M.8 .7l4.2 4.3L.8 9.3" fill="none" stroke="#a9a9a9" stroke-width="1.15"/></svg>
<span class="t" style="left:389.00px;top:67.00px;font-size:13px;color:#a9a9a9;letter-spacing:0.151px;">luke-hou.github.io</span>
<svg class="b" style="left:500px;top:71px;" width="6" height="10" viewBox="0 0 6 10"><path d="M.8 .7l4.2 4.3L.8 9.3" fill="none" stroke="#a9a9a9" stroke-width="1.15"/></svg>
<span class="t" style="left:510.80px;top:67.00px;font-size:13px;color:#a9a9a9;letter-spacing:0.135px;">tutorials</span>
<svg class="b" style="left:561.5px;top:71px;" width="6" height="10" viewBox="0 0 6 10"><path d="M.8 .7l4.2 4.3L.8 9.3" fill="none" stroke="#a9a9a9" stroke-width="1.15"/></svg>
<svg class="b" style="left:574px;top:70.5px;" width="14" height="11" viewBox="0 0 14 11"><g fill="none" stroke="#e37933" stroke-width="1.4"><path d="M3.9 1.8L.9 5.5l3 3.7M10.1 1.8l3 3.7-3 3.7M8.3 .7L5.7 10.3"/></g></svg>
<span class="t" style="left:595.70px;top:67.00px;font-size:13px;color:#a9a9a9;letter-spacing:0.233px;">gemini-cli-tutorial-4.html</span>
<svg class="b" style="left:744.8px;top:71px;" width="6" height="10" viewBox="0 0 6 10"><path d="M.8 .7l4.2 4.3L.8 9.3" fill="none" stroke="#a9a9a9" stroke-width="1.15"/></svg>
<svg class="b" style="left:757px;top:69.6px;" width="14" height="14" viewBox="0 0 14 14"><g fill="none" stroke="#75beff" stroke-width="1.2" stroke-linejoin="round"><path d="M1 4.4L8.6 1.6 13 3.6v6.2L5.6 12.6 1 10.4z"/><path d="M1 4.4l4.6 2.2L13 3.6M5.6 6.6v6"/></g></svg>
<span class="t" style="left:774.90px;top:67.00px;font-size:13px;color:#a9a9a9;letter-spacing:0.380px;">html</span>
<svg class="b" style="left:805.3px;top:71px;" width="6" height="10" viewBox="0 0 6 10"><path d="M.8 .7l4.2 4.3L.8 9.3" fill="none" stroke="#a9a9a9" stroke-width="1.15"/></svg>
<svg class="b" style="left:817.3px;top:69.6px;" width="14" height="14" viewBox="0 0 14 14"><g fill="none" stroke="#75beff" stroke-width="1.2" stroke-linejoin="round"><path d="M1 4.4L8.6 1.6 13 3.6v6.2L5.6 12.6 1 10.4z"/><path d="M1 4.4l4.6 2.2L13 3.6M5.6 6.6v6"/></g></svg>
<span class="t" style="left:836.00px;top:67.00px;font-size:13px;color:#a9a9a9;letter-spacing:0.270px;">body</span>
<svg class="b" style="left:870px;top:71px;" width="6" height="10" viewBox="0 0 6 10"><path d="M.8 .7l4.2 4.3L.8 9.3" fill="none" stroke="#a9a9a9" stroke-width="1.15"/></svg>
<svg class="b" style="left:881.7px;top:69.6px;" width="14" height="14" viewBox="0 0 14 14"><g fill="none" stroke="#75beff" stroke-width="1.2" stroke-linejoin="round"><path d="M1 4.4L8.6 1.6 13 3.6v6.2L5.6 12.6 1 10.4z"/><path d="M1 4.4l4.6 2.2L13 3.6M5.6 6.6v6"/></g></svg>
<span class="t" style="left:900.40px;top:67.00px;font-size:13px;color:#a9a9a9;letter-spacing:0.057px;">main.container.mt-5</span>
<svg class="b" style="left:1021px;top:71px;" width="6" height="10" viewBox="0 0 6 10"><path d="M.8 .7l4.2 4.3L.8 9.3" fill="none" stroke="#a9a9a9" stroke-width="1.15"/></svg>
<svg class="b" style="left:1032.3px;top:69.6px;" width="14" height="14" viewBox="0 0 14 14"><g fill="none" stroke="#75beff" stroke-width="1.2" stroke-linejoin="round"><path d="M1 4.4L8.6 1.6 13 3.6v6.2L5.6 12.6 1 10.4z"/><path d="M1 4.4l4.6 2.2L13 3.6M5.6 6.6v6"/></g></svg>
<span class="t" style="left:1050.90px;top:67.00px;font-size:13px;color:#a9a9a9;letter-spacing:0.081px;">div.row</span>
<svg class="b" style="left:1097.4px;top:71px;" width="6" height="10" viewBox="0 0 6 10"><path d="M.8 .7l4.2 4.3L.8 9.3" fill="none" stroke="#a9a9a9" stroke-width="1.15"/></svg>
<svg class="b" style="left:1108.7px;top:69.6px;" width="14" height="14" viewBox="0 0 14 14"><g fill="none" stroke="#75beff" stroke-width="1.2" stroke-linejoin="round"><path d="M1 4.4L8.6 1.6 13 3.6v6.2L5.6 12.6 1 10.4z"/><path d="M1 4.4l4.6 2.2L13 3.6M5.6 6.6v6"/></g></svg>
<span class="t" style="left:1127.10px;top:67.00px;font-size:13px;color:#a9a9a9;letter-spacing:0.140px;">div.col-lg-10.mx-auto</span>
<svg class="b" style="left:1255.4px;top:71px;" width="6" height="10" viewBox="0 0 6 10"><path d="M.8 .7l4.2 4.3L.8 9.3" fill="none" stroke="#a9a9a9" stroke-width="1.15"/></svg>
<svg class="b" style="left:1267.3px;top:69.6px;" width="14" height="14" viewBox="0 0 14 14"><g fill="none" stroke="#75beff" stroke-width="1.2" stroke-linejoin="round"><path d="M1 4.4L8.6 1.6 13 3.6v6.2L5.6 12.6 1 10.4z"/><path d="M1 4.4l4.6 2.2L13 3.6M5.6 6.6v6"/></g></svg>
<span class="t" style="left:1284.90px;top:67.00px;font-size:13px;color:#a9a9a9;letter-spacing:0.121px;">article.blog-post</span>
<svg class="b" style="left:1383.9px;top:71px;" width="6" height="10" viewBox="0 0 6 10"><path d="M.8 .7l4.2 4.3L.8 9.3" fill="none" stroke="#a9a9a9" stroke-width="1.15"/></svg>
<svg class="b" style="left:1395.7px;top:69.6px;" width="14" height="14" viewBox="0 0 14 14"><g fill="none" stroke="#75beff" stroke-width="1.2" stroke-linejoin="round"><path d="M1 4.4L8.6 1.6 13 3.6v6.2L5.6 12.6 1 10.4z"/><path d="M1 4.4l4.6 2.2L13 3.6M5.6 6.6v6"/></g></svg>
<span class="t" style="left:1414.00px;top:67.00px;font-size:13px;color:#a9a9a9;letter-spacing:0.249px;">div.tutorial-content</span>
<svg class="b" style="left:1529.8px;top:71px;" width="6" height="10" viewBox="0 0 6 10"><path d="M.8 .7l4.2 4.3L.8 9.3" fill="none" stroke="#a9a9a9" stroke-width="1.15"/></svg>
<svg class="b" style="left:1541.1px;top:69.6px;" width="14" height="14" viewBox="0 0 14 14"><g fill="none" stroke="#75beff" stroke-width="1.2" stroke-linejoin="round"><path d="M1 4.4L8.6 1.6 13 3.6v6.2L5.6 12.6 1 10.4z"/><path d="M1 4.4l4.6 2.2L13 3.6M5.6 6.6v6"/></g></svg>
<span class="t" style="left:1559.70px;top:67.00px;font-size:13px;color:#a9a9a9;transform:scaleX(0.9954);">section.step-by-step</span>
<svg class="b" style="left:1680.8px;top:71px;" width="6" height="10" viewBox="0 0 6 10"><path d="M.8 .7l4.2 4.3L.8 9.3" fill="none" stroke="#a9a9a9" stroke-width="1.15"/></svg>
<svg class="b" style="left:1692.6px;top:69.6px;" width="14" height="14" viewBox="0 0 14 14"><g fill="none" stroke="#75beff" stroke-width="1.2" stroke-linejoin="round"><path d="M1 4.4L8.6 1.6 13 3.6v6.2L5.6 12.6 1 10.4z"/><path d="M1 4.4l4.6 2.2L13 3.6M5.6 6.6v6"/></g></svg>
<span class="t" style="left:1711.00px;top:67.00px;font-size:13px;color:#a9a9a9;transform:scaleX(0.9991);">div.step</span>
<div class="pane" style="left:313px;top:87px;width:741px;height:923px;background:#1f1f1f">
<div class="b" style="left:57px;top:91px;width:1px;height:133px;background:#404040;"></div>
<div class="b" style="left:87.8px;top:91px;width:1px;height:133px;background:#404040;"></div>
<div class="b" style="left:118.6px;top:91px;width:1px;height:133px;background:#404040;"></div>
<div class="b" style="left:149.4px;top:91px;width:1px;height:133px;background:#404040;"></div>
<div class="b" style="left:180.2px;top:91px;width:1px;height:133px;background:#404040;"></div>
<div class="b" style="left:211px;top:91px;width:1px;height:133px;background:#404040;"></div>
<div class="b" style="left:241.8px;top:91px;width:1px;height:133px;background:#404040;"></div>
<div class="b" style="left:272.6px;top:148px;width:1px;height:76px;background:#404040;"></div>
<div class="num" style="top:90.6px;left:-17.5px;width:60px;">171</div>
<div class="ln" style="top:90.6px;left:272.60px"><span class="p">&lt;/</span><span class="g">div</span><span class="p">&gt;</span></div>
<div class="num" style="top:109.6px;left:-17.5px;width:60px;">172</div>
<div class="num" style="top:128.6px;left:-17.5px;width:60px;">173</div>
<div class="ln" style="top:128.6px;left:272.60px"><span class="p">&lt;</span><span class="g">div</span><span class="x"> </span><span class="a">class</span><span class="x">=</span><span class="s">"step"</span><span class="p">&gt;</span></div>
<div class="num" style="top:147.6px;left:-17.5px;width:60px;">174</div>
<div class="ln" style="top:147.6px;left:303.40px"><span class="p">&lt;</span><span class="g">h3</span><span class="x"> </span><span class="a">id</span><span class="x">=</span><span class="s">"section-2"</span><span class="p">&gt;</span><span class="p">&lt;</span><span class="g">i</span><span class="x"> </span><span class="a">class</span><span class="x">=</span><span class="s">"fas fa-file-invoice step-icon"</span><span class="p">&gt;</span><span class="p">&lt;/</span><span class="g">i</span><span class="p">&gt;</span><span class="x"><span class="cj"><i>第</i><i>二</i><i>部</i><i>分</i></span></span></div>
<div class="num" style="top:166.6px;left:-17.5px;width:60px;">175</div>
<div class="ln" style="top:166.6px;left:303.40px"><span class="p">&lt;</span><span class="g">p</span><span class="p">&gt;</span><span class="p">&lt;</span><span class="g">strong</span><span class="p">&gt;</span><span class="x"><span class="cj"><i>痛</i><i>點</i><i>場</i><i>景</i><i>：</i></span></span><span class="p">&lt;/</span><span class="g">strong</span><span class="p">&gt;</span><span class="x"> <span class="cj"><i>當</i><i>您</i><i>有</i><i>一</i><i>個</i><i>複</i><i>雜</i><i>的</i><i>想</i><i>法</i><i>或</i><i>任</i><i>務</i><i>，</i><i>想</i><i>要</i><i>請</i></span> AI <span class="cj"><i>幫</i><i>忙</i><i>時</i></span></span></div>
<div class="num" style="top:185.6px;left:-17.5px;width:60px;">176</div>
<div class="ln" style="top:185.6px;left:303.40px"><span class="p">&lt;</span><span class="g">p</span><span class="p">&gt;</span><span class="x"><span class="cj"><i>一</i><i>個</i><i>良</i><i>好</i><i>的</i><i>工</i><i>作</i><i>習</i><i>慣</i><i>是</i><i>：</i></span></span><span class="p">&lt;</span><span class="g">strong</span><span class="p">&gt;</span><span class="x"><span class="cj"><i>不</i><i>要</i><i>在</i><i>對</i><i>話</i><i>框</i><i>裡</i><i>寫</i><i>長</i><i>篇</i><i>大</i><i>論</i></span></span><span class="p">&lt;/</span><span class="g">strong</span><span class="p">&gt;</span><span class="x"><span class="cj"><i>。</i><i>請</i><i>先</i></span></span></div>
<div class="num" style="top:204.6px;left:-17.5px;width:60px;">177</div>
<div class="b" style="left:57px;top:224px;width:684px;height:475px;background-image:linear-gradient(-45deg,#434343 12.5%,transparent 12.5%,transparent 50%,#434343 50%,#434343 62.5%,transparent 62.5%,transparent 100%);background-size:8px 8px;background-position:-1px 1px;"></div>
<div class="b" style="left:57px;top:699px;width:1px;height:133px;background:#404040;"></div>
<div class="b" style="left:87.8px;top:699px;width:1px;height:133px;background:#404040;"></div>
<div class="b" style="left:118.6px;top:699px;width:1px;height:133px;background:#404040;"></div>
<div class="b" style="left:149.4px;top:699px;width:1px;height:133px;background:#404040;"></div>
<div class="b" style="left:180.2px;top:699px;width:1px;height:133px;background:#404040;"></div>
<div class="b" style="left:211px;top:699px;width:1px;height:133px;background:#404040;"></div>
<div class="b" style="left:241.8px;top:699px;width:1px;height:133px;background:#404040;"></div>
<div class="b" style="left:272.6px;top:699px;width:1px;height:133px;background:#404040;"></div>
<div class="b" style="left:57px;top:832px;width:1px;height:19px;background:#404040;"></div>
<div class="num" style="top:698.6px;left:-17.5px;width:60px;">178</div>
<div class="ln" style="top:698.6px;left:303.40px"><span class="p">&lt;</span><span class="g">hr</span><span class="x"> </span><span class="a">class</span><span class="x">=</span><span class="s">"my-4"</span><span class="p">&gt;</span></div>
<div class="num" style="top:717.6px;left:-17.5px;width:60px;">179</div>
<div class="num" style="top:736.6px;left:-17.5px;width:60px;">180</div>
<div class="ln" style="top:736.6px;left:303.40px"><span class="p">&lt;</span><span class="g">h4</span><span class="x"> </span><span class="a">class</span><span class="x">=</span><span class="s">"text-success"</span><span class="p">&gt;</span><span class="x">Part 1: <span class="cj"><i>用</i></span> Markdown <span class="cj"><i>檔</i><i>案</i><i>準</i><i>備</i><i>「</i><i>給</i></span> AI <span class="cj"><i>的</i><i>書</i><i>面</i><i>簡</i><i>報</i><i>」</i></span></span><span class="p">&lt;/</span><span class="g">h4</span><span class="p">&gt;</span></div>
<div class="num" style="top:755.6px;left:-17.5px;width:60px;">181</div>
<div class="ln" style="top:755.6px;left:303.40px"><span class="p">&lt;</span><span class="g">p</span><span class="p">&gt;</span><span class="x"><span class="cj"><i>在</i><i>簡</i><i>報</i><i>中</i><i>用</i><i>標</i><i>題</i><i>、</i><i>列</i><i>表</i><i>、</i><i>粗</i><i>體</i><i>字</i><i>，</i><i>把</i><i>背</i><i>景</i><i>資</i><i>訊</i><i>、</i><i>任</i><i>務</i><i>要</i><i>求</i><i>、</i><i>輸</i><i>出</i><i>格</i><i>式</i><i>都</i><i>寫</i><i>清</i><i>楚</i></span></span></div>
<div class="num" style="top:774.6px;left:-17.5px;width:60px;">182</div>
<div class="ln" style="top:774.6px;left:303.40px"><span class="p">&lt;</span><span class="g">pre</span><span class="p">&gt;</span><span class="p">&lt;</span><span class="g">code</span><span class="p">&gt;</span><span class="x"><span class="cj"><i>請</i><i>根</i><i>據</i><i>我</i><i>這</i><i>份</i><i>簡</i><i>報</i></span> `@my_complex_idea.md` <span class="cj"><i>的</i><i>內</i><i>容</i><i>，</i><i>完</i><i>成</i><i>任</i><i>務</i><i>。</i></span></span></div>
<div class="num" style="top:793.6px;left:-17.5px;width:60px;">183</div>
<div class="ln" style="top:793.6px;left:303.40px"><span class="p">&lt;</span><span class="g">p</span><span class="x"> </span><span class="a">class</span><span class="x">=</span><span class="s">"mt-4"</span><span class="p">&gt;</span><span class="p">&lt;</span><span class="g">strong</span><span class="p">&gt;</span><span class="x">`my_complex_idea.md` <span class="cj"><i>範</i><i>例</i><i>內</i><i>容</i><i>：</i></span></span><span class="p">&lt;/</span><span class="g">strong</span><span class="p">&gt;</span><span class="p">&lt;/</span><span class="g">p</span><span class="p">&gt;</span></div>
<div class="num" style="top:812.6px;left:-17.5px;width:60px;">184</div>
<div class="ln" style="top:812.6px;left:303.40px"><span class="p">&lt;</span><span class="g">pre</span><span class="p">&gt;</span><span class="p">&lt;</span><span class="g">code</span><span class="p">&gt;</span><span class="x"># <span class="cj"><i>書</i><i>面</i><i>簡</i><i>報</i><i>：</i><i>為</i><i>「</i><i>線</i><i>上</i><i>學</i><i>習</i><i>平</i><i>台</i><i>」</i><i>規</i><i>劃</i><i>「</i><i>社</i><i>群</i><i>討</i><i>論</i><i>區</i><i>」</i><i>功</i><i>能</i><i>需</i><i>求</i></span></span></div>
<div class="num" style="top:831.6px;left:-17.5px;width:60px;">185</div>
<div class="num" style="top:850.6px;left:-17.5px;width:60px;">186</div>
<div class="ln" style="top:850.6px;left:57.00px"><span class="x">## 1. <span class="cj"><i>背</i><i>景</i><i>與</i><i>目</i><i>標</i></span> (Background &amp; Goal)</span></div>
<div class="num" style="top:869.6px;left:-17.5px;width:60px;">187</div>
<div class="num" style="top:888.6px;left:-17.5px;width:60px;">188</div>
<div class="ln" style="top:888.6px;left:57.00px"><span class="x"><span class="cj"><i>我</i><i>們</i><i>的</i><i>線</i><i>上</i><i>學</i><i>習</i><i>平</i><i>台</i><i>目</i><i>前</i><i>缺</i><i>乏</i><i>一</i><i>個</i><i>讓</i><i>學</i><i>員</i><i>互</i><i>動</i><i>、</i><i>提</i><i>問</i><i>、</i><i>分</i><i>享</i><i>心</i><i>得</i><i>的</i><i>地</i><i>方</i><i>。</i><i>這</i><i>導</i><i>致</i><i>學</i><i>員</i><i>黏</i><i>著</i><i>度</i><i>不</i><i>高</i><i>，</i><i>學</i><i>習</i><i>氛</i><i>圍</i><i>也</i><i>比</i><i>較</i><i>冷</i><i>淡</i></span></span></div>
<div class="num" style="top:907.6px;left:-17.5px;width:60px;">189</div>
<div class="b" style="left:726px;top:0px;width:3px;height:923px;background:linear-gradient(90deg,rgba(0,0,0,0),rgba(0,0,0,0.34) 50%,rgba(0,0,0,0));"></div>
<div class="ln" style="top:-1px;left:728px;width:13px;overflow:hidden;color:#ccc"><span class="cj" style="margin-left:-4px">致</span></div>
<div class="ln" style="top:18px;left:728px;width:13px;overflow:hidden;color:#ccc"><span class="cj" style="margin-left:-4px">追</span></div>
<div class="ln" style="top:56px;left:728px;width:13px;overflow:hidden;color:#9cdcfe"><span class="cj" style="margin-left:-4px">忙</span></div>
<div class="ln" style="top:75px;left:728px;width:13px;overflow:hidden;color:#ccc"><span class="cj" style="margin-left:-4px">RD</span></div>
<div class="b" style="left:0;top:0;width:727px;height:95px;background:#1f1f1f;box-shadow:0 1px 2px 1px rgba(0,0,0,0.85)">
<div class="num" style="top:0px;left:-17.5px;width:60px;">2</div>
<div class="ln" style="top:0px;left:57.00px"><span class="p">&lt;</span><span class="g">html</span><span class="x"> </span><span class="a">lang</span><span class="x">=</span><span class="s">"zh-TW"</span><span class="p">&gt;</span></div>
<div class="num" style="top:19px;left:-17.5px;width:60px;">95</div>
<div class="ln" style="top:19px;left:57.00px"><span class="p">&lt;</span><span class="g">body</span><span class="p">&gt;</span></div>
<div class="num" style="top:38px;left:-17.5px;width:60px;">120</div>
<div class="ln" style="top:38px;left:87.80px"><span class="p">&lt;</span><span class="g">main</span><span class="x"> </span><span class="a">class</span><span class="x">=</span><span class="s">"container mt-5"</span><span class="p">&gt;</span></div>
<div class="num" style="top:57px;left:-17.5px;width:60px;">121</div>
<div class="ln" style="top:57px;left:118.60px"><span class="p">&lt;</span><span class="g">div</span><span class="x"> </span><span class="a">class</span><span class="x">=</span><span class="s">"row"</span><span class="p">&gt;</span></div>
<div class="num" style="top:76px;left:-17.5px;width:60px;">122</div>
<div class="ln" style="top:76px;left:149.40px"><span class="p">&lt;</span><span class="g">div</span><span class="x"> </span><span class="a">class</span><span class="x">=</span><span class="s">"col-lg-10 mx-auto"</span><span class="p">&gt;</span></div>
</div>
</div>
<div class="pane" style="left:1054px;top:87px;width:742px;height:923px;background:#1f1f1f">
<div class="b" style="left:57px;top:91px;width:1px;height:133px;background:#404040;"></div>
<div class="b" style="left:87.8px;top:91px;width:1px;height:133px;background:#404040;"></div>
<div class="b" style="left:118.6px;top:91px;width:1px;height:133px;background:#404040;"></div>
<div class="b" style="left:149.4px;top:91px;width:1px;height:133px;background:#404040;"></div>
<div class="b" style="left:180.2px;top:91px;width:1px;height:133px;background:#404040;"></div>
<div class="b" style="left:211px;top:91px;width:1px;height:133px;background:#404040;"></div>
<div class="b" style="left:241.8px;top:91px;width:1px;height:133px;background:#404040;"></div>
<div class="b" style="left:272.6px;top:148px;width:1px;height:76px;background:#404040;"></div>
<div class="num" style="top:90.6px;left:-18px;width:60px;">171</div>
<div class="ln" style="top:90.6px;left:272.60px"><span class="p">&lt;/</span><span class="g">div</span><span class="p">&gt;</span></div>
<div class="num" style="top:109.6px;left:-18px;width:60px;">172</div>
<div class="num" style="top:128.6px;left:-18px;width:60px;">173</div>
<div class="ln" style="top:128.6px;left:272.60px"><span class="p">&lt;</span><span class="g">div</span><span class="x"> </span><span class="a">class</span><span class="x">=</span><span class="s">"step"</span><span class="p">&gt;</span></div>
<div class="num" style="top:147.6px;left:-18px;width:60px;">174</div>
<div class="ln" style="top:147.6px;left:303.40px"><span class="p">&lt;</span><span class="g">h3</span><span class="x"> </span><span class="a">id</span><span class="x">=</span><span class="s">"section-2"</span><span class="p">&gt;</span><span class="p">&lt;</span><span class="g">i</span><span class="x"> </span><span class="a">class</span><span class="x">=</span><span class="s">"fas fa-file-invoice step-icon"</span><span class="p">&gt;</span><span class="p">&lt;/</span><span class="g">i</span><span class="p">&gt;</span><span class="x"><span class="cj"><i>第</i><i>二</i><i>部</i><i>分</i></span></span></div>
<div class="num" style="top:166.6px;left:-18px;width:60px;">175</div>
<div class="ln" style="top:166.6px;left:303.40px"><span class="p">&lt;</span><span class="g">p</span><span class="p">&gt;</span><span class="p">&lt;</span><span class="g">strong</span><span class="p">&gt;</span><span class="x"><span class="cj"><i>痛</i><i>點</i><i>場</i><i>景</i><i>：</i></span></span><span class="p">&lt;/</span><span class="g">strong</span><span class="p">&gt;</span><span class="x"> <span class="cj"><i>當</i><i>您</i><i>有</i><i>一</i><i>個</i><i>複</i><i>雜</i><i>的</i><i>想</i><i>法</i><i>或</i><i>任</i><i>務</i><i>，</i><i>想</i><i>要</i><i>請</i></span> AI <span class="cj"><i>幫</i><i>忙</i><i>時</i></span></span></div>
<div class="num" style="top:185.6px;left:-18px;width:60px;">176</div>
<div class="ln" style="top:185.6px;left:303.40px"><span class="p">&lt;</span><span class="g">p</span><span class="p">&gt;</span><span class="x"><span class="cj"><i>一</i><i>個</i><i>良</i><i>好</i><i>的</i><i>工</i><i>作</i><i>習</i><i>慣</i><i>是</i><i>：</i></span></span><span class="p">&lt;</span><span class="g">strong</span><span class="p">&gt;</span><span class="x"><span class="cj"><i>不</i><i>要</i><i>在</i><i>對</i><i>話</i><i>框</i><i>裡</i><i>寫</i><i>長</i><i>篇</i><i>大</i><i>論</i></span></span><span class="p">&lt;/</span><span class="g">strong</span><span class="p">&gt;</span><span class="x"><span class="cj"><i>。</i><i>請</i><i>先</i></span></span></div>
<div class="num" style="top:204.6px;left:-18px;width:60px;">177</div>
<div class="b" style="left:57px;top:224px;width:685px;height:475px;background:#4e5c2c;"></div>
<div class="b" style="left:57px;top:224px;width:685px;height:1px;background:#5e6b3f;"></div>
<div class="b" style="left:57px;top:242px;width:685px;height:1px;background:#566436;"></div>
<div class="b" style="left:57px;top:224px;width:1px;height:95px;background:#66734a;"></div>
<div class="b" style="left:87.8px;top:224px;width:1px;height:95px;background:#66734a;"></div>
<div class="b" style="left:118.6px;top:224px;width:1px;height:95px;background:#66734a;"></div>
<div class="b" style="left:149.4px;top:224px;width:1px;height:95px;background:#66734a;"></div>
<div class="b" style="left:180.2px;top:224px;width:1px;height:95px;background:#66734a;"></div>
<div class="b" style="left:211px;top:224px;width:1px;height:95px;background:#66734a;"></div>
<div class="b" style="left:241.8px;top:224px;width:1px;height:95px;background:#66734a;"></div>
<div class="b" style="left:272.6px;top:224px;width:1px;height:95px;background:#66734a;"></div>
<div class="b" style="left:303.4px;top:243px;width:1px;height:76px;background:#9aa27c;"></div>
<div class="b" style="left:57px;top:433px;width:1px;height:266px;background:#66734a;"></div>
<div class="b" style="left:87.8px;top:433px;width:1px;height:266px;background:#66734a;"></div>
<div class="b" style="left:118.6px;top:433px;width:1px;height:266px;background:#66734a;"></div>
<div class="b" style="left:149.4px;top:433px;width:1px;height:266px;background:#66734a;"></div>
<div class="b" style="left:180.2px;top:433px;width:1px;height:266px;background:#66734a;"></div>
<div class="b" style="left:211px;top:433px;width:1px;height:266px;background:#66734a;"></div>
<div class="b" style="left:241.8px;top:433px;width:1px;height:266px;background:#66734a;"></div>
<div class="b" style="left:272.6px;top:433px;width:1px;height:266px;background:#66734a;"></div>
<div class="b" style="left:303.4px;top:433px;width:1px;height:228px;background:#66734a;"></div>
<div class="b" style="left:334.2px;top:471px;width:1px;height:133px;background:#66734a;"></div>
<div class="b" style="left:365px;top:528px;width:1px;height:38px;background:#66734a;"></div>
<div class="num" style="top:223.6px;left:-18px;width:60px;color:#cccccc;">178</div>
<div class="b" style="left:42.7px;top:233px;width:9.4px;height:1.2px;background:#9d9d9d;"></div>
<div class="b" style="left:46.8px;top:228.9px;width:1.2px;height:9.4px;background:#9d9d9d;"></div>
<div class="ln" style="top:223.6px;left:303.40px"><span class="p">&lt;</span><span class="g">div</span><span class="x"> </span><span class="a">class</span><span class="x">=</span><span class="s">"p-3 my-4 bg-light border rounded"</span><span class="p">&gt;</span></div>
<div class="num" style="top:242.6px;left:-18px;width:60px;">179</div>
<div class="b" style="left:42.7px;top:252px;width:9.4px;height:1.2px;background:#9d9d9d;"></div>
<div class="b" style="left:46.8px;top:247.9px;width:1.2px;height:9.4px;background:#9d9d9d;"></div>
<div class="ln" style="top:242.6px;left:334.20px"><span class="p">&lt;</span><span class="g">h5</span><span class="p">&gt;</span><span class="p">&lt;</span><span class="g">i</span><span class="x"> </span><span class="a">class</span><span class="x">=</span><span class="s">"fas fa-pencil-alt me-2"</span><span class="p">&gt;</span><span class="p">&lt;/</span><span class="g">i</span><span class="p">&gt;</span><span class="x"><span class="cj"><i>小</i><i>提</i><i>示</i><i>：</i><i>什</i><i>麼</i><i>是</i></span> Markdown<span class="cj"><i>？</i></span></span><span class="p">&lt;/</span><span class="g">h5</span><span class="p">&gt;</span></div>
<div class="num" style="top:261.6px;left:-18px;width:60px;">180</div>
<div class="b" style="left:42.7px;top:271px;width:9.4px;height:1.2px;background:#9d9d9d;"></div>
<div class="b" style="left:46.8px;top:266.9px;width:1.2px;height:9.4px;background:#9d9d9d;"></div>
<div class="ln" style="top:261.6px;left:334.20px"><span class="p">&lt;</span><span class="g">p</span><span class="p">&gt;</span><span class="x">Markdown <span class="cj"><i>是</i><i>一</i><i>種</i><i>輕</i><i>量</i><i>級</i><i>的</i><i>標</i><i>記</i><i>式</i><i>語</i><i>言</i><i>，</i><i>讓</i><i>您</i><i>可</i><i>以</i><i>用</i><i>簡</i><i>單</i><i>的</i><i>純</i><i>文</i><i>字</i><i>格</i><i>式</i></span></span></div>
<div class="num" style="top:280.6px;left:-18px;width:60px;">181</div>
<div class="b" style="left:42.7px;top:290px;width:9.4px;height:1.2px;background:#9d9d9d;"></div>
<div class="b" style="left:46.8px;top:285.9px;width:1.2px;height:9.4px;background:#9d9d9d;"></div>
<div class="ln" style="top:280.6px;left:334.20px"><span class="p">&lt;</span><span class="g">p</span><span class="x"> </span><span class="a">class</span><span class="x">=</span><span class="s">"mb-2"</span><span class="p">&gt;</span><span class="p">&lt;</span><span class="g">strong</span><span class="p">&gt;</span><span class="x"><span class="cj"><i>例</i><i>如</i><i>，</i><i>一</i><i>段</i><i>這</i><i>樣</i><i>的</i></span> Markdown <span class="cj"><i>文</i><i>字</i><i>：</i></span></span><span class="p">&lt;/</span><span class="g">strong</span><span class="p">&gt;</span><span class="p">&lt;/</span><span class="g">p</span><span class="p">&gt;</span></div>
<div class="num" style="top:299.6px;left:-18px;width:60px;">182</div>
<div class="b" style="left:42.7px;top:309px;width:9.4px;height:1.2px;background:#9d9d9d;"></div>
<div class="b" style="left:46.8px;top:304.9px;width:1.2px;height:9.4px;background:#9d9d9d;"></div>
<div class="ln" style="top:299.6px;left:334.20px"><span class="p">&lt;</span><span class="g">pre</span><span class="x"> </span><span class="a">class</span><span class="x">=</span><span class="s">"bg-white text-dark"</span><span class="p">&gt;</span><span class="p">&lt;</span><span class="g">code</span><span class="p">&gt;</span><span class="x"># <span class="cj"><i>專</i><i>案</i><i>目</i><i>標</i></span></span></div>
<div class="num" style="top:318.6px;left:-18px;width:60px;">183</div>
<div class="b" style="left:42.7px;top:328px;width:9.4px;height:1.2px;background:#9d9d9d;"></div>
<div class="b" style="left:46.8px;top:323.9px;width:1.2px;height:9.4px;background:#9d9d9d;"></div>
<div class="num" style="top:337.6px;left:-18px;width:60px;">184</div>
<div class="b" style="left:42.7px;top:347px;width:9.4px;height:1.2px;background:#9d9d9d;"></div>
<div class="b" style="left:46.8px;top:342.9px;width:1.2px;height:9.4px;background:#9d9d9d;"></div>
<div class="ln" style="top:337.6px;left:57.00px"><span class="x">## <span class="cj"><i>核</i><i>心</i><i>功</i><i>能</i></span></span></div>
<div class="num" style="top:356.6px;left:-18px;width:60px;">185</div>
<div class="b" style="left:42.7px;top:366px;width:9.4px;height:1.2px;background:#9d9d9d;"></div>
<div class="b" style="left:46.8px;top:361.9px;width:1.2px;height:9.4px;background:#9d9d9d;"></div>
<div class="ln" style="top:356.6px;left:57.00px"><span class="x">- [x] <span class="cj"><i>使</i><i>用</i><i>者</i><i>登</i><i>入</i></span></span></div>
<div class="num" style="top:375.6px;left:-18px;width:60px;">186</div>
<div class="b" style="left:42.7px;top:385px;width:9.4px;height:1.2px;background:#9d9d9d;"></div>
<div class="b" style="left:46.8px;top:380.9px;width:1.2px;height:9.4px;background:#9d9d9d;"></div>
<div class="ln" style="top:375.6px;left:57.00px"><span class="x">- [ ] **<span class="cj"><i>個</i><i>人</i><i>資</i><i>料</i></span>**<span class="cj"><i>頁</i><i>面</i></span></span></div>
<div class="num" style="top:394.6px;left:-18px;width:60px;">187</div>
<div class="b" style="left:42.7px;top:404px;width:9.4px;height:1.2px;background:#9d9d9d;"></div>
<div class="b" style="left:46.8px;top:399.9px;width:1.2px;height:9.4px;background:#9d9d9d;"></div>
<div class="num" style="top:413.6px;left:-18px;width:60px;">188</div>
<div class="b" style="left:42.7px;top:423px;width:9.4px;height:1.2px;background:#9d9d9d;"></div>
<div class="b" style="left:46.8px;top:418.9px;width:1.2px;height:9.4px;background:#9d9d9d;"></div>
<div class="ln" style="top:413.6px;left:57.00px"><span class="x">*<span class="cj"><i>請</i><i>優</i><i>先</i><i>完</i><i>成</i><i>個</i><i>人</i><i>資</i><i>料</i><i>頁</i><i>面</i></span>*</span><span class="p">&lt;/</span><span class="g">code</span><span class="p">&gt;</span><span class="p">&lt;/</span><span class="g">pre</span><span class="p">&gt;</span></div>
<div class="num" style="top:432.6px;left:-18px;width:60px;">189</div>
<div class="b" style="left:42.7px;top:442px;width:9.4px;height:1.2px;background:#9d9d9d;"></div>
<div class="b" style="left:46.8px;top:437.9px;width:1.2px;height:9.4px;background:#9d9d9d;"></div>
<div class="ln" style="top:432.6px;left:334.20px"><span class="p">&lt;</span><span class="g">p</span><span class="x"> </span><span class="a">class</span><span class="x">=</span><span class="s">"mt-3 mb-2"</span><span class="p">&gt;</span><span class="p">&lt;</span><span class="g">strong</span><span class="p">&gt;</span><span class="x"><span class="cj"><i>將</i><i>會</i><i>被</i><i>渲</i><i>染</i><i>成</i><i>類</i><i>似</i><i>這</i><i>樣</i><i>的</i><i>效</i><i>果</i><i>：</i></span></span><span class="p">&lt;/</span><span class="g">strong</span><span class="p">&gt;</span><span class="p">&lt;/</span><span class="g">p</span><span class="p">&gt;</span></div>
<div class="num" style="top:451.6px;left:-18px;width:60px;">190</div>
<div class="b" style="left:42.7px;top:461px;width:9.4px;height:1.2px;background:#9d9d9d;"></div>
<div class="b" style="left:46.8px;top:456.9px;width:1.2px;height:9.4px;background:#9d9d9d;"></div>
<div class="ln" style="top:451.6px;left:334.20px"><span class="p">&lt;</span><span class="g">div</span><span class="x"> </span><span class="a">class</span><span class="x">=</span><span class="s">"border p-3 rounded"</span><span class="x"> </span><span class="a">style</span><span class="x">=</span><span class="s">"background-color: #fff;"</span><span class="p">&gt;</span></div>
<div class="num" style="top:470.6px;left:-18px;width:60px;">191</div>
<div class="b" style="left:42.7px;top:480px;width:9.4px;height:1.2px;background:#9d9d9d;"></div>
<div class="b" style="left:46.8px;top:475.9px;width:1.2px;height:9.4px;background:#9d9d9d;"></div>
<div class="ln" style="top:470.6px;left:365.00px"><span class="p">&lt;</span><span class="g">h1</span><span class="x"> </span><span class="a">style</span><span class="x">=</span><span class="s">"font-size: 1.7rem; border-bottom: 1px solid #eee;"</span><span class="p">&gt;</span></div>
<div class="num" style="top:489.6px;left:-18px;width:60px;">192</div>
<div class="b" style="left:42.7px;top:499px;width:9.4px;height:1.2px;background:#9d9d9d;"></div>
<div class="b" style="left:46.8px;top:494.9px;width:1.2px;height:9.4px;background:#9d9d9d;"></div>
<div class="ln" style="top:489.6px;left:365.00px"><span class="p">&lt;</span><span class="g">h2</span><span class="x"> </span><span class="a">style</span><span class="x">=</span><span class="s">"font-size: 1.4rem;"</span><span class="p">&gt;</span><span class="x"><span class="cj"><i>核</i><i>心</i><i>功</i><i>能</i></span></span><span class="p">&lt;/</span><span class="g">h2</span><span class="p">&gt;</span></div>
<div class="num" style="top:508.6px;left:-18px;width:60px;">193</div>
<div class="b" style="left:42.7px;top:518px;width:9.4px;height:1.2px;background:#9d9d9d;"></div>
<div class="b" style="left:46.8px;top:513.9px;width:1.2px;height:9.4px;background:#9d9d9d;"></div>
<div class="ln" style="top:508.6px;left:365.00px"><span class="p">&lt;</span><span class="g">ul</span><span class="x"> </span><span class="a">style</span><span class="x">=</span><span class="s">"list-style-type: none; padding-left: 0;"</span><span class="p">&gt;</span></div>
<div class="num" style="top:527.6px;left:-18px;width:60px;">194</div>
<div class="b" style="left:42.7px;top:537px;width:9.4px;height:1.2px;background:#9d9d9d;"></div>
<div class="b" style="left:46.8px;top:532.9px;width:1.2px;height:9.4px;background:#9d9d9d;"></div>
<div class="ln" style="top:527.6px;left:395.80px"><span class="p">&lt;</span><span class="g">li</span><span class="p">&gt;</span><span class="p">&lt;</span><span class="g">input</span><span class="x"> </span><span class="a">type</span><span class="x">=</span><span class="s">"checkbox"</span><span class="x"> </span><span class="a">checked</span><span class="x"> </span><span class="a">disabled</span><span class="p">&gt;</span><span class="x"> <span class="cj"><i>使</i><i>用</i><i>者</i><i>登</i><i>入</i></span></span><span class="p">&lt;/</span><span class="g">li</span><span class="p">&gt;</span></div>
<div class="num" style="top:546.6px;left:-18px;width:60px;">195</div>
<div class="b" style="left:42.7px;top:556px;width:9.4px;height:1.2px;background:#9d9d9d;"></div>
<div class="b" style="left:46.8px;top:551.9px;width:1.2px;height:9.4px;background:#9d9d9d;"></div>
<div class="ln" style="top:546.6px;left:395.80px"><span class="p">&lt;</span><span class="g">li</span><span class="p">&gt;</span><span class="p">&lt;</span><span class="g">input</span><span class="x"> </span><span class="a">type</span><span class="x">=</span><span class="s">"checkbox"</span><span class="x"> </span><span class="a">disabled</span><span class="p">&gt;</span><span class="x"> </span><span class="p">&lt;</span><span class="g">strong</span><span class="p">&gt;</span><span class="x"><span class="cj"><i>個</i><i>人</i><i>資</i><i>料</i></span></span><span class="p">&lt;/</span><span class="g">strong</span><span class="p">&gt;</span></div>
<div class="num" style="top:565.6px;left:-18px;width:60px;">196</div>
<div class="b" style="left:42.7px;top:575px;width:9.4px;height:1.2px;background:#9d9d9d;"></div>
<div class="b" style="left:46.8px;top:570.9px;width:1.2px;height:9.4px;background:#9d9d9d;"></div>
<div class="ln" style="top:565.6px;left:365.00px"><span class="p">&lt;/</span><span class="g">ul</span><span class="p">&gt;</span></div>
<div class="num" style="top:584.6px;left:-18px;width:60px;">197</div>
<div class="b" style="left:42.7px;top:594px;width:9.4px;height:1.2px;background:#9d9d9d;"></div>
<div class="b" style="left:46.8px;top:589.9px;width:1.2px;height:9.4px;background:#9d9d9d;"></div>
<div class="ln" style="top:584.6px;left:365.00px"><span class="p">&lt;</span><span class="g">p</span><span class="p">&gt;</span><span class="p">&lt;</span><span class="g">em</span><span class="p">&gt;</span><span class="x"><span class="cj"><i>請</i><i>優</i><i>先</i><i>完</i><i>成</i><i>個</i><i>人</i><i>資</i><i>料</i><i>頁</i><i>面</i></span></span><span class="p">&lt;/</span><span class="g">em</span><span class="p">&gt;</span><span class="p">&lt;/</span><span class="g">p</span><span class="p">&gt;</span></div>
<div class="num" style="top:603.6px;left:-18px;width:60px;">198</div>
<div class="b" style="left:42.7px;top:613px;width:9.4px;height:1.2px;background:#9d9d9d;"></div>
<div class="b" style="left:46.8px;top:608.9px;width:1.2px;height:9.4px;background:#9d9d9d;"></div>
<div class="ln" style="top:603.6px;left:334.20px"><span class="p">&lt;/</span><span class="g">div</span><span class="p">&gt;</span></div>
<div class="num" style="top:622.6px;left:-18px;width:60px;">199</div>
<div class="b" style="left:42.7px;top:632px;width:9.4px;height:1.2px;background:#9d9d9d;"></div>
<div class="b" style="left:46.8px;top:627.9px;width:1.2px;height:9.4px;background:#9d9d9d;"></div>
<div class="ln" style="top:622.6px;left:334.20px"><span class="p">&lt;</span><span class="g">p</span><span class="x"> </span><span class="a">class</span><span class="x">=</span><span class="s">"mt-3"</span><span class="p">&gt;</span><span class="x"><span class="cj"><i>若</i><i>想</i><i>學</i><i>習</i><i>更</i><i>多</i><i>完</i><i>整</i><i>的</i></span> Markdown <span class="cj"><i>語</i><i>法</i><i>，</i><i>可</i><i>以</i><i>參</i><i>考</i><i>官</i><i>方</i></span></span></div>
<div class="num" style="top:641.6px;left:-18px;width:60px;">200</div>
<div class="b" style="left:42.7px;top:651px;width:9.4px;height:1.2px;background:#9d9d9d;"></div>
<div class="b" style="left:46.8px;top:646.9px;width:1.2px;height:9.4px;background:#9d9d9d;"></div>
<div class="ln" style="top:641.6px;left:334.20px"><span class="p">&lt;</span><span class="g">p</span><span class="x"> </span><span class="a">class</span><span class="x">=</span><span class="s">"mt-2 mb-0"</span><span class="p">&gt;</span><span class="x"><span class="cj"><i>當</i><i>您</i><i>需</i><i>要</i><i>結</i><i>構</i><i>化</i><i>地</i><i>向</i></span> AI <span class="cj"><i>傳</i><i>達</i><i>複</i><i>雜</i><i>指</i><i>令</i><i>時</i><i>，</i></span>Markdown</span></div>
<div class="num" style="top:660.6px;left:-18px;width:60px;">201</div>
<div class="b" style="left:42.7px;top:670px;width:9.4px;height:1.2px;background:#9d9d9d;"></div>
<div class="b" style="left:46.8px;top:665.9px;width:1.2px;height:9.4px;background:#9d9d9d;"></div>
<div class="ln" style="top:660.6px;left:303.40px"><span class="p">&lt;/</span><span class="g">div</span><span class="p">&gt;</span></div>
<div class="num" style="top:679.6px;left:-18px;width:60px;">202</div>
<div class="b" style="left:42.7px;top:689px;width:9.4px;height:1.2px;background:#9d9d9d;"></div>
<div class="b" style="left:46.8px;top:684.9px;width:1.2px;height:9.4px;background:#9d9d9d;"></div>
<div class="b" style="left:57px;top:699px;width:1px;height:133px;background:#404040;"></div>
<div class="b" style="left:87.8px;top:699px;width:1px;height:133px;background:#404040;"></div>
<div class="b" style="left:118.6px;top:699px;width:1px;height:133px;background:#404040;"></div>
<div class="b" style="left:149.4px;top:699px;width:1px;height:133px;background:#404040;"></div>
<div class="b" style="left:180.2px;top:699px;width:1px;height:133px;background:#404040;"></div>
<div class="b" style="left:211px;top:699px;width:1px;height:133px;background:#404040;"></div>
<div class="b" style="left:241.8px;top:699px;width:1px;height:133px;background:#404040;"></div>
<div class="b" style="left:272.6px;top:699px;width:1px;height:133px;background:#404040;"></div>
<div class="b" style="left:57px;top:832px;width:1px;height:19px;background:#404040;"></div>
<div class="num" style="top:698.6px;left:-18px;width:60px;">203</div>
<div class="ln" style="top:698.6px;left:303.40px"><span class="p">&lt;</span><span class="g">hr</span><span class="x"> </span><span class="a">class</span><span class="x">=</span><span class="s">"my-4"</span><span class="p">&gt;</span></div>
<div class="num" style="top:717.6px;left:-18px;width:60px;">204</div>
<div class="num" style="top:736.6px;left:-18px;width:60px;">205</div>
<div class="ln" style="top:736.6px;left:303.40px"><span class="p">&lt;</span><span class="g">h4</span><span class="x"> </span><span class="a">class</span><span class="x">=</span><span class="s">"text-success"</span><span class="p">&gt;</span><span class="x">Part 1: <span class="cj"><i>用</i></span> Markdown <span class="cj"><i>檔</i><i>案</i><i>準</i><i>備</i><i>「</i><i>給</i></span> AI <span class="cj"><i>的</i><i>書</i><i>面</i><i>簡</i><i>報</i><i>」</i></span></span><span class="p">&lt;/</span><span class="g">h4</span><span class="p">&gt;</span></div>
<div class="num" style="top:755.6px;left:-18px;width:60px;">206</div>
<div class="ln" style="top:755.6px;left:303.40px"><span class="p">&lt;</span><span class="g">p</span><span class="p">&gt;</span><span class="x"><span class="cj"><i>在</i><i>簡</i><i>報</i><i>中</i><i>用</i><i>標</i><i>題</i><i>、</i><i>列</i><i>表</i><i>、</i><i>粗</i><i>體</i><i>字</i><i>，</i><i>把</i><i>背</i><i>景</i><i>資</i><i>訊</i><i>、</i><i>任</i><i>務</i><i>要</i><i>求</i><i>、</i><i>輸</i><i>出</i><i>格</i><i>式</i><i>都</i><i>寫</i><i>清</i><i>楚</i></span></span></div>
<div class="num" style="top:774.6px;left:-18px;width:60px;">207</div>
<div class="ln" style="top:774.6px;left:303.40px"><span class="p">&lt;</span><span class="g">pre</span><span class="p">&gt;</span><span class="p">&lt;</span><span class="g">code</span><span class="p">&gt;</span><span class="x"><span class="cj"><i>請</i><i>根</i><i>據</i><i>我</i><i>這</i><i>份</i><i>簡</i><i>報</i></span> `@my_complex_idea.md` <span class="cj"><i>的</i><i>內</i><i>容</i><i>，</i><i>完</i><i>成</i><i>任</i><i>務</i><i>。</i></span></span></div>
<div class="num" style="top:793.6px;left:-18px;width:60px;">208</div>
<div class="ln" style="top:793.6px;left:303.40px"><span class="p">&lt;</span><span class="g">p</span><span class="x"> </span><span class="a">class</span><span class="x">=</span><span class="s">"mt-4"</span><span class="p">&gt;</span><span class="p">&lt;</span><span class="g">strong</span><span class="p">&gt;</span><span class="x">`my_complex_idea.md` <span class="cj"><i>範</i><i>例</i><i>內</i><i>容</i><i>：</i></span></span><span class="p">&lt;/</span><span class="g">strong</span><span class="p">&gt;</span><span class="p">&lt;/</span><span class="g">p</span><span class="p">&gt;</span></div>
<div class="num" style="top:812.6px;left:-18px;width:60px;">209</div>
<div class="ln" style="top:812.6px;left:303.40px"><span class="p">&lt;</span><span class="g">pre</span><span class="p">&gt;</span><span class="p">&lt;</span><span class="g">code</span><span class="p">&gt;</span><span class="x"># <span class="cj"><i>書</i><i>面</i><i>簡</i><i>報</i><i>：</i><i>為</i><i>「</i><i>線</i><i>上</i><i>學</i><i>習</i><i>平</i><i>台</i><i>」</i><i>規</i><i>劃</i><i>「</i><i>社</i><i>群</i><i>討</i><i>論</i><i>區</i><i>」</i><i>功</i><i>能</i><i>需</i><i>求</i></span></span></div>
<div class="num" style="top:831.6px;left:-18px;width:60px;">210</div>
<div class="num" style="top:850.6px;left:-18px;width:60px;">211</div>
<div class="ln" style="top:850.6px;left:57.00px"><span class="x">## 1. <span class="cj"><i>背</i><i>景</i><i>與</i><i>目</i><i>標</i></span> (Background &amp; Goal)</span></div>
<div class="num" style="top:869.6px;left:-18px;width:60px;">212</div>
<div class="num" style="top:888.6px;left:-18px;width:60px;">213</div>
<div class="ln" style="top:888.6px;left:57.00px"><span class="x"><span class="cj"><i>我</i><i>們</i><i>的</i><i>線</i><i>上</i><i>學</i><i>習</i><i>平</i><i>台</i><i>目</i><i>前</i><i>缺</i><i>乏</i><i>一</i><i>個</i><i>讓</i><i>學</i><i>員</i><i>互</i><i>動</i><i>、</i><i>提</i><i>問</i><i>、</i><i>分</i><i>享</i><i>心</i><i>得</i><i>的</i><i>地</i><i>方</i><i>。</i><i>這</i><i>導</i><i>致</i><i>學</i><i>員</i><i>黏</i><i>著</i><i>度</i><i>不</i><i>高</i><i>，</i><i>學</i><i>習</i><i>氛</i><i>圍</i><i>也</i><i>比</i><i>較</i><i>冷</i><i>淡</i></span></span></div>
<div class="num" style="top:907.6px;left:-18px;width:60px;">214</div>
<div class="b" style="left:726.3px;top:0px;width:3px;height:923px;background:linear-gradient(90deg,rgba(0,0,0,0),rgba(0,0,0,0.34) 50%,rgba(0,0,0,0));"></div>
<div class="ln" style="top:-1px;left:729px;width:13px;overflow:hidden;color:#ccc"><span class="cj" style="margin-left:-4px">致</span></div>
<div class="ln" style="top:18px;left:729px;width:13px;overflow:hidden;color:#ccc"><span class="cj" style="margin-left:-4px">追</span></div>
<div class="ln" style="top:56px;left:729px;width:13px;overflow:hidden;color:#9cdcfe"><span class="cj" style="margin-left:-4px">忙</span></div>
<div class="ln" style="top:75px;left:729px;width:13px;overflow:hidden;color:#ccc"><span class="cj" style="margin-left:-4px">RD</span></div>
<div class="b" style="left:0;top:0;width:728px;height:95px;background:#1f1f1f;box-shadow:0 1px 2px 1px rgba(0,0,0,0.85)">
<div class="num" style="top:0px;left:-18px;width:60px;">2</div>
<div class="ln" style="top:0px;left:57.00px"><span class="p">&lt;</span><span class="g">html</span><span class="x"> </span><span class="a">lang</span><span class="x">=</span><span class="s">"zh-TW"</span><span class="p">&gt;</span></div>
<div class="num" style="top:19px;left:-18px;width:60px;">95</div>
<div class="ln" style="top:19px;left:57.00px"><span class="p">&lt;</span><span class="g">body</span><span class="p">&gt;</span></div>
<div class="num" style="top:38px;left:-18px;width:60px;">120</div>
<div class="ln" style="top:38px;left:87.80px"><span class="p">&lt;</span><span class="g">main</span><span class="x"> </span><span class="a">class</span><span class="x">=</span><span class="s">"container mt-5"</span><span class="p">&gt;</span></div>
<div class="num" style="top:57px;left:-18px;width:60px;">121</div>
<div class="ln" style="top:57px;left:118.60px"><span class="p">&lt;</span><span class="g">div</span><span class="x"> </span><span class="a">class</span><span class="x">=</span><span class="s">"row"</span><span class="p">&gt;</span></div>
<div class="num" style="top:76px;left:-18px;width:60px;">122</div>
<div class="ln" style="top:76px;left:149.40px"><span class="p">&lt;</span><span class="g">div</span><span class="x"> </span><span class="a">class</span><span class="x">=</span><span class="s">"col-lg-10 mx-auto"</span><span class="p">&gt;</span></div>
</div>
</div>
<div class="b" style="left:1795px;top:87px;width:33px;height:923px;background:#1f1f1f;"></div>
<div class="b" style="left:1795px;top:352px;width:30px;height:77px;background:#424242;"></div>
<div class="b" style="left:1810px;top:370px;width:15px;height:40px;background:#627048;"></div>
<div class="b" style="left:1825px;top:35px;width:1px;height:975px;background:#2b2b2b;"></div>
<div class="b" style="left:1826px;top:35px;width:2px;height:975px;background:#1c1c1c;"></div>
<div class="b" style="left:193px;top:694.5px;width:394.5px;height:24.5px;background:#202020;border:1px solid #454545;border-radius:5px;box-shadow:0 2px 8px rgba(0,0,0,0.36);"></div>
<span class="t" style="left:201.80px;top:696.84px;font-size:12px;color:#cccccc;letter-spacing:0.189px;">C:\Src\luke-hou.github.io\tutorials\gemini-cli-tutorial-4.html • Modified</span>
</body></html>
